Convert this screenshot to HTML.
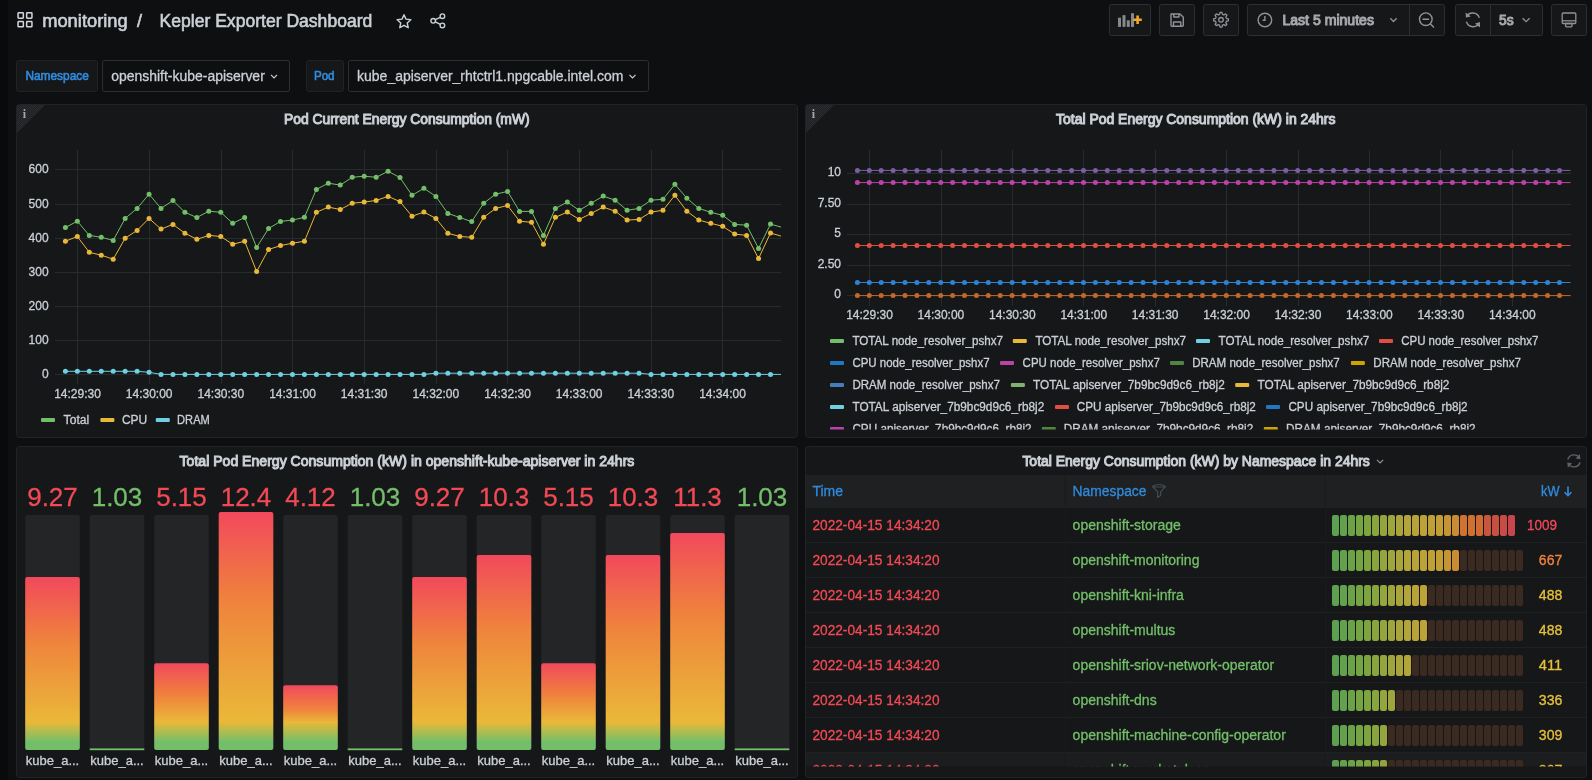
<!DOCTYPE html><html><head><meta charset="utf-8"><title>Kepler Exporter Dashboard</title>
<style>html,body{margin:0;padding:0;background:#0e0f11;width:1592px;height:780px;overflow:hidden}svg{display:block;font-family:"Liberation Sans", sans-serif;will-change:transform}text{stroke-width:0.3px}</style></head><body>
<svg width="1592" height="780" viewBox="0 0 1592 780">
<defs>
<pattern id="hatch" width="2" height="2" patternUnits="userSpaceOnUse"><rect width="2" height="2" fill="#1f2023"/><rect width="1" height="1" fill="#2c2d31"/><rect x="1" y="1" width="1" height="1" fill="#2c2d31"/></pattern>
<linearGradient id="bargrad" x1="0" y1="1" x2="0" y2="0"><stop offset="0" stop-color="#73bf69"/><stop offset="0.025" stop-color="#73bf69"/><stop offset="0.13" stop-color="#eab839"/><stop offset="0.5" stop-color="#ef843c"/><stop offset="0.92" stop-color="#f2495c"/><stop offset="1" stop-color="#f2495c"/></linearGradient>
<clipPath id="c1"><rect x="54.8" y="140" width="726.2" height="250"/></clipPath>
<clipPath id="c2"><rect x="846.9" y="140" width="723.6" height="170"/></clipPath>
<clipPath id="leg2"><rect x="805" y="325" width="782" height="104.5"/></clipPath>
<clipPath id="tbl"><rect x="805" y="470" width="782" height="296.5"/></clipPath>
</defs>
<rect width="1592" height="780" fill="#0e0f11"/>
<rect x="0" y="0" width="8" height="780" fill="#0a0a0c"/>
<rect x="18.05" y="12.85" width="5.3" height="5.3" rx="0.7" fill="none" stroke="#d4d8de" style="stroke-width:1.5px"/>
<rect x="26.65" y="12.85" width="5.3" height="5.3" rx="0.7" fill="none" stroke="#d4d8de" style="stroke-width:1.5px"/>
<rect x="18.05" y="21.55" width="5.3" height="5.3" rx="0.7" fill="none" stroke="#d4d8de" style="stroke-width:1.5px"/>
<rect x="26.65" y="21.55" width="5.3" height="5.3" rx="0.7" fill="none" stroke="#d4d8de" style="stroke-width:1.5px"/>
<text x="42.2" y="27" font-size="18" fill="#cbd0d6" stroke="#cbd0d6" style="stroke-width:0.6px" textLength="85.5" lengthAdjust="spacingAndGlyphs">monitoring</text>
<text x="137" y="27" font-size="18" fill="#cbd0d6" stroke="#cbd0d6" style="stroke-width:0.6px">/</text>
<text x="159.5" y="27" font-size="18" fill="#cbd0d6" stroke="#cbd0d6" style="stroke-width:0.6px" textLength="212.8" lengthAdjust="spacingAndGlyphs">Kepler Exporter Dashboard</text>
<polygon points="404.00,14.70 406.00,19.15 410.85,19.68 407.23,22.95 408.23,27.72 404.00,25.30 399.77,27.72 400.77,22.95 397.15,19.68 402.00,19.15" fill="none" stroke="#cbd0d6" stroke-width="1.4" stroke-linejoin="round"/>
<g fill="none" stroke="#cbd0d6" stroke-width="1.4"><circle cx="442.4" cy="16.2" r="2.3"/><circle cx="433.2" cy="20.8" r="2.3"/><circle cx="442.4" cy="25.4" r="2.3"/><path d="M435.3 19.7 L440.3 17.3 M435.3 21.9 L440.3 24.3"/></g>
<rect x="1109.5" y="4.5" width="41" height="31" rx="2" fill="#161719" stroke="#2d2f31" stroke-width="1"/>
<rect x="1159.5" y="4.5" width="35" height="31" rx="2" fill="#161719" stroke="#2d2f31" stroke-width="1"/>
<rect x="1203.5" y="4.5" width="35" height="31" rx="2" fill="#161719" stroke="#2d2f31" stroke-width="1"/>
<rect x="1247.5" y="4.5" width="197" height="31" rx="2" fill="#161719" stroke="#2d2f31" stroke-width="1"/>
<rect x="1409" y="5" width="1" height="30" fill="#2d2f31"/>
<rect x="1455.5" y="4.5" width="87" height="31" rx="2" fill="#161719" stroke="#2d2f31" stroke-width="1"/>
<rect x="1490" y="5" width="1" height="30" fill="#2d2f31"/>
<rect x="1551.5" y="4.5" width="35" height="31" rx="2" fill="#161719" stroke="#2d2f31" stroke-width="1"/>
<g fill="#86888c"><rect x="1118" y="17.7" width="3" height="9.2"/><rect x="1122.5" y="15.1" width="3" height="11.8"/><rect x="1126.8" y="20.3" width="3" height="6.6"/><rect x="1131" y="13.2" width="3" height="13.7"/></g>
<path d="M1137.6 15.6 V24 M1133.4 19.8 H1141.8" stroke="#f5a623" stroke-width="2.6"/>
<g fill="none" stroke="#909297" stroke-width="1.4" stroke-linejoin="round"><path d="M1171 14 H1180 L1183.3 17.3 V25.2 Q1183.3 26.2 1182.3 26.2 H1171.9 Q1171 26.2 1171 25.2 Z"/><path d="M1173.8 14 V17 H1179 V14"/><path d="M1173.5 26.2 V22 H1180.8 V26.2"/></g>
<polygon points="1228.40,19.80 1228.34,20.77 1226.41,21.25 1226.17,21.94 1225.85,22.60 1226.87,24.30 1226.23,25.03 1225.50,25.67 1223.80,24.65 1223.14,24.97 1222.45,25.21 1221.97,27.14 1221.00,27.20 1220.03,27.14 1219.55,25.21 1218.86,24.97 1218.20,24.65 1216.50,25.67 1215.77,25.03 1215.13,24.30 1216.15,22.60 1215.83,21.94 1215.59,21.25 1213.66,20.77 1213.60,19.80 1213.66,18.83 1215.59,18.35 1215.83,17.66 1216.15,17.00 1215.13,15.30 1215.77,14.57 1216.50,13.93 1218.20,14.95 1218.86,14.63 1219.55,14.39 1220.03,12.46 1221.00,12.40 1221.97,12.46 1222.45,14.39 1223.14,14.63 1223.80,14.95 1225.50,13.93 1226.23,14.57 1226.87,15.30 1225.85,17.00 1226.17,17.66 1226.41,18.35 1228.34,18.83" fill="none" stroke="#909297" stroke-width="1.3" stroke-linejoin="round"/>
<circle cx="1221" cy="19.8" r="2.3" fill="none" stroke="#909297" stroke-width="1.3"/>
<g fill="none" stroke="#909297" stroke-width="1.4"><circle cx="1264.9" cy="20" r="6.8"/><path d="M1264.9 16 V20.3 H1262.6"/></g>
<text x="1282.4" y="24.9" font-size="14" fill="#a6a8ac" stroke="#a6a8ac" style="stroke-width:1px" textLength="91.6" lengthAdjust="spacingAndGlyphs">Last 5 minutes</text>
<path d="M1390.3 18.3 L1393.5 21.5 L1396.7 18.3" fill="none" stroke="#909297" stroke-width="1.3"/>
<g fill="none" stroke="#909297" stroke-width="1.4"><circle cx="1425.8" cy="19.2" r="6.3"/><path d="M1430.3 23.7 L1434 27.4 M1422.5 19.2 H1429.1"/></g>
<g fill="none" stroke="#909297" stroke-width="1.4"><path d="M1466.3 17 A7 7 0 0 1 1479.3 17.8"/><path d="M1479.5 22.5 A7 7 0 0 1 1466.4 21.8"/></g>
<path d="M1465.6 12.4 L1466 17.6 L1470.8 16.4 Z M1480.1 27.4 L1479.8 22.2 L1475 23.4 Z" fill="#909297"/>
<text x="1499" y="24.6" font-size="14" fill="#a6a8ac" stroke="#a6a8ac" style="stroke-width:1px" textLength="14.6" lengthAdjust="spacingAndGlyphs">5s</text>
<path d="M1522.6 18.3 L1526.1 21.6 L1529.6 18.3" fill="none" stroke="#909297" stroke-width="1.3"/>
<g fill="none" stroke="#909297" stroke-width="1.3"><rect x="1562.2" y="13" width="13.6" height="10.5" rx="1"/><path d="M1562.2 20.8 H1575.8"/><rect x="1565.6" y="23.5" width="6.4" height="3.3" rx="0.8"/></g>
<rect x="16.5" y="60.5" width="81" height="31" rx="2" fill="#161719" stroke="#212224" stroke-width="1"/>
<text x="25.4" y="79.8" font-size="12" fill="#318bdc" stroke="#318bdc" style="stroke-width:0.6px" textLength="63.4" lengthAdjust="spacingAndGlyphs">Namespace</text>
<rect x="102.5" y="60.5" width="187" height="31" rx="2" fill="#0e0f11" stroke="#2d2f31" stroke-width="1"/>
<text x="111.2" y="80.5" font-size="14" fill="#cbd0d6" stroke="#cbd0d6" textLength="153.6" lengthAdjust="spacingAndGlyphs">openshift-kube-apiserver</text>
<path d="M271 74.8 L274 77.8 L277 74.8" fill="none" stroke="#cbd0d6" stroke-width="1.2"/>
<rect x="306.5" y="60.5" width="37" height="31" rx="2" fill="#161719" stroke="#212224" stroke-width="1"/>
<text x="313.9" y="79.8" font-size="12" fill="#318bdc" stroke="#318bdc" style="stroke-width:0.6px" textLength="20.7" lengthAdjust="spacingAndGlyphs">Pod</text>
<rect x="348.5" y="60.5" width="300" height="31" rx="2" fill="#0e0f11" stroke="#2d2f31" stroke-width="1"/>
<text x="357.1" y="80.5" font-size="14" fill="#cbd0d6" stroke="#cbd0d6" textLength="266.3" lengthAdjust="spacingAndGlyphs">kube_apiserver_rhtctrl1.npgcable.intel.com</text>
<path d="M629.5 74.8 L632.5 77.8 L635.5 74.8" fill="none" stroke="#cbd0d6" stroke-width="1.2"/>
<rect x="16.5" y="104.5" width="781" height="333" rx="3" fill="#161719" stroke="#222327" stroke-width="1"/>
<rect x="805.5" y="104.5" width="781" height="333" rx="3" fill="#161719" stroke="#222327" stroke-width="1"/>
<rect x="16.5" y="446.5" width="781" height="331" rx="3" fill="#161719" stroke="#222327" stroke-width="1"/>
<rect x="805.5" y="446.5" width="781" height="331" rx="3" fill="#161719" stroke="#222327" stroke-width="1"/>
<path d="M17 105 H45 L17 133 Z" fill="url(#hatch)"/>
<text x="22.8" y="118" font-size="12" fill="#a4a8ac" font-weight="700" font-family="Liberation Serif">i</text>
<path d="M806 105 H834 L806 133 Z" fill="url(#hatch)"/>
<text x="811.8" y="118" font-size="12" fill="#a4a8ac" font-weight="700" font-family="Liberation Serif">i</text>
<text x="284" y="123.8" font-size="14" fill="#cbd0d6" stroke="#cbd0d6" style="stroke-width:1px" textLength="245.6" lengthAdjust="spacingAndGlyphs">Pod Current Energy Consumption (mW)</text>
<text x="1056" y="123.8" font-size="14" fill="#cbd0d6" stroke="#cbd0d6" style="stroke-width:1px" textLength="279.5" lengthAdjust="spacingAndGlyphs">Total Pod Energy Consumption (kW) in 24hrs</text>
<text x="179.6" y="465.9" font-size="14" fill="#cbd0d6" stroke="#cbd0d6" style="stroke-width:1px" textLength="454.8" lengthAdjust="spacingAndGlyphs">Total Pod Energy Consumption (kW) in openshift-kube-apiserver in 24hrs</text>
<text x="1022.4" y="465.9" font-size="14" fill="#cbd0d6" stroke="#cbd0d6" style="stroke-width:1px" textLength="347.4" lengthAdjust="spacingAndGlyphs">Total Energy Consumption (kW) by Namespace in 24hrs</text>
<path d="M1377 459.8 L1380.1 462.9 L1383.2 459.8" fill="none" stroke="#909297" stroke-width="1.2"/>
<rect x="55" y="374.00" width="726" height="1" fill="#262b2d"/>
<text x="48.6" y="377.5" font-size="12" fill="#cbd0d6" stroke="#cbd0d6" text-anchor="end">0</text>
<rect x="55" y="340.00" width="726" height="1" fill="#262b2d"/>
<text x="48.6" y="343.5" font-size="12" fill="#cbd0d6" stroke="#cbd0d6" text-anchor="end">100</text>
<rect x="55" y="306.00" width="726" height="1" fill="#262b2d"/>
<text x="48.6" y="309.5" font-size="12" fill="#cbd0d6" stroke="#cbd0d6" text-anchor="end">200</text>
<rect x="55" y="272.00" width="726" height="1" fill="#262b2d"/>
<text x="48.6" y="275.5" font-size="12" fill="#cbd0d6" stroke="#cbd0d6" text-anchor="end">300</text>
<rect x="55" y="238.00" width="726" height="1" fill="#262b2d"/>
<text x="48.6" y="241.5" font-size="12" fill="#cbd0d6" stroke="#cbd0d6" text-anchor="end">400</text>
<rect x="55" y="204.00" width="726" height="1" fill="#262b2d"/>
<text x="48.6" y="207.5" font-size="12" fill="#cbd0d6" stroke="#cbd0d6" text-anchor="end">500</text>
<rect x="55" y="169.00" width="726" height="1" fill="#262b2d"/>
<text x="48.6" y="172.5" font-size="12" fill="#cbd0d6" stroke="#cbd0d6" text-anchor="end">600</text>
<rect x="77" y="150" width="1" height="234" fill="#262b2d"/>
<text x="77.5" y="397.8" font-size="12" fill="#cbd0d6" stroke="#cbd0d6" text-anchor="middle">14:29:30</text>
<rect x="149" y="150" width="1" height="234" fill="#262b2d"/>
<text x="149.17" y="397.8" font-size="12" fill="#cbd0d6" stroke="#cbd0d6" text-anchor="middle">14:30:00</text>
<rect x="221" y="150" width="1" height="234" fill="#262b2d"/>
<text x="220.84" y="397.8" font-size="12" fill="#cbd0d6" stroke="#cbd0d6" text-anchor="middle">14:30:30</text>
<rect x="292" y="150" width="1" height="234" fill="#262b2d"/>
<text x="292.51" y="397.8" font-size="12" fill="#cbd0d6" stroke="#cbd0d6" text-anchor="middle">14:31:00</text>
<rect x="364" y="150" width="1" height="234" fill="#262b2d"/>
<text x="364.18" y="397.8" font-size="12" fill="#cbd0d6" stroke="#cbd0d6" text-anchor="middle">14:31:30</text>
<rect x="436" y="150" width="1" height="234" fill="#262b2d"/>
<text x="435.85" y="397.8" font-size="12" fill="#cbd0d6" stroke="#cbd0d6" text-anchor="middle">14:32:00</text>
<rect x="507" y="150" width="1" height="234" fill="#262b2d"/>
<text x="507.52" y="397.8" font-size="12" fill="#cbd0d6" stroke="#cbd0d6" text-anchor="middle">14:32:30</text>
<rect x="579" y="150" width="1" height="234" fill="#262b2d"/>
<text x="579.19" y="397.8" font-size="12" fill="#cbd0d6" stroke="#cbd0d6" text-anchor="middle">14:33:00</text>
<rect x="651" y="150" width="1" height="234" fill="#262b2d"/>
<text x="650.86" y="397.8" font-size="12" fill="#cbd0d6" stroke="#cbd0d6" text-anchor="middle">14:33:30</text>
<rect x="722" y="150" width="1" height="234" fill="#262b2d"/>
<text x="722.53" y="397.8" font-size="12" fill="#cbd0d6" stroke="#cbd0d6" text-anchor="middle">14:34:00</text>
<g clip-path="url(#c1)"><path d="M65.40 371.30 L77.35 371.30 L89.30 371.30 L101.25 371.30 L113.20 371.30 L125.16 371.30 L137.11 371.30 L149.06 372.30 L161.01 374.40 L172.96 374.40 L184.91 374.40 L196.86 374.40 L208.81 374.40 L220.76 374.40 L232.71 374.40 L244.67 374.40 L256.62 374.40 L268.57 374.40 L280.52 374.40 L292.47 374.40 L304.42 374.40 L316.37 374.40 L328.32 374.40 L340.27 374.40 L352.22 374.40 L364.18 374.40 L376.13 374.40 L388.08 374.40 L400.03 374.40 L411.98 374.40 L423.93 374.40 L435.88 373.20 L447.83 373.20 L459.78 373.20 L471.73 373.20 L483.69 373.20 L495.64 373.20 L507.59 373.20 L519.54 373.20 L531.49 373.20 L543.44 373.20 L555.39 373.20 L567.34 373.20 L579.29 373.20 L591.24 373.20 L603.20 373.20 L615.15 373.20 L627.10 373.20 L639.05 373.20 L651.00 374.40 L662.95 374.40 L674.90 374.40 L686.85 374.40 L698.80 374.40 L710.75 374.40 L722.71 374.40 L734.66 374.40 L746.61 374.40 L758.56 374.40 L770.51 374.40 L782.46 374.40" fill="none" stroke="#6ed0e0" stroke-width="1"/>
<circle cx="65.40" cy="371.30" r="2.5" fill="#6ed0e0"/><circle cx="77.35" cy="371.30" r="2.5" fill="#6ed0e0"/><circle cx="89.30" cy="371.30" r="2.5" fill="#6ed0e0"/><circle cx="101.25" cy="371.30" r="2.5" fill="#6ed0e0"/><circle cx="113.20" cy="371.30" r="2.5" fill="#6ed0e0"/><circle cx="125.16" cy="371.30" r="2.5" fill="#6ed0e0"/><circle cx="137.11" cy="371.30" r="2.5" fill="#6ed0e0"/><circle cx="149.06" cy="372.30" r="2.5" fill="#6ed0e0"/><circle cx="161.01" cy="374.40" r="2.5" fill="#6ed0e0"/><circle cx="172.96" cy="374.40" r="2.5" fill="#6ed0e0"/><circle cx="184.91" cy="374.40" r="2.5" fill="#6ed0e0"/><circle cx="196.86" cy="374.40" r="2.5" fill="#6ed0e0"/><circle cx="208.81" cy="374.40" r="2.5" fill="#6ed0e0"/><circle cx="220.76" cy="374.40" r="2.5" fill="#6ed0e0"/><circle cx="232.71" cy="374.40" r="2.5" fill="#6ed0e0"/><circle cx="244.67" cy="374.40" r="2.5" fill="#6ed0e0"/><circle cx="256.62" cy="374.40" r="2.5" fill="#6ed0e0"/><circle cx="268.57" cy="374.40" r="2.5" fill="#6ed0e0"/><circle cx="280.52" cy="374.40" r="2.5" fill="#6ed0e0"/><circle cx="292.47" cy="374.40" r="2.5" fill="#6ed0e0"/><circle cx="304.42" cy="374.40" r="2.5" fill="#6ed0e0"/><circle cx="316.37" cy="374.40" r="2.5" fill="#6ed0e0"/><circle cx="328.32" cy="374.40" r="2.5" fill="#6ed0e0"/><circle cx="340.27" cy="374.40" r="2.5" fill="#6ed0e0"/><circle cx="352.22" cy="374.40" r="2.5" fill="#6ed0e0"/><circle cx="364.18" cy="374.40" r="2.5" fill="#6ed0e0"/><circle cx="376.13" cy="374.40" r="2.5" fill="#6ed0e0"/><circle cx="388.08" cy="374.40" r="2.5" fill="#6ed0e0"/><circle cx="400.03" cy="374.40" r="2.5" fill="#6ed0e0"/><circle cx="411.98" cy="374.40" r="2.5" fill="#6ed0e0"/><circle cx="423.93" cy="374.40" r="2.5" fill="#6ed0e0"/><circle cx="435.88" cy="373.20" r="2.5" fill="#6ed0e0"/><circle cx="447.83" cy="373.20" r="2.5" fill="#6ed0e0"/><circle cx="459.78" cy="373.20" r="2.5" fill="#6ed0e0"/><circle cx="471.73" cy="373.20" r="2.5" fill="#6ed0e0"/><circle cx="483.69" cy="373.20" r="2.5" fill="#6ed0e0"/><circle cx="495.64" cy="373.20" r="2.5" fill="#6ed0e0"/><circle cx="507.59" cy="373.20" r="2.5" fill="#6ed0e0"/><circle cx="519.54" cy="373.20" r="2.5" fill="#6ed0e0"/><circle cx="531.49" cy="373.20" r="2.5" fill="#6ed0e0"/><circle cx="543.44" cy="373.20" r="2.5" fill="#6ed0e0"/><circle cx="555.39" cy="373.20" r="2.5" fill="#6ed0e0"/><circle cx="567.34" cy="373.20" r="2.5" fill="#6ed0e0"/><circle cx="579.29" cy="373.20" r="2.5" fill="#6ed0e0"/><circle cx="591.24" cy="373.20" r="2.5" fill="#6ed0e0"/><circle cx="603.20" cy="373.20" r="2.5" fill="#6ed0e0"/><circle cx="615.15" cy="373.20" r="2.5" fill="#6ed0e0"/><circle cx="627.10" cy="373.20" r="2.5" fill="#6ed0e0"/><circle cx="639.05" cy="373.20" r="2.5" fill="#6ed0e0"/><circle cx="651.00" cy="374.40" r="2.5" fill="#6ed0e0"/><circle cx="662.95" cy="374.40" r="2.5" fill="#6ed0e0"/><circle cx="674.90" cy="374.40" r="2.5" fill="#6ed0e0"/><circle cx="686.85" cy="374.40" r="2.5" fill="#6ed0e0"/><circle cx="698.80" cy="374.40" r="2.5" fill="#6ed0e0"/><circle cx="710.75" cy="374.40" r="2.5" fill="#6ed0e0"/><circle cx="722.71" cy="374.40" r="2.5" fill="#6ed0e0"/><circle cx="734.66" cy="374.40" r="2.5" fill="#6ed0e0"/><circle cx="746.61" cy="374.40" r="2.5" fill="#6ed0e0"/><circle cx="758.56" cy="374.40" r="2.5" fill="#6ed0e0"/><circle cx="770.51" cy="374.40" r="2.5" fill="#6ed0e0"/>
</g>
<g clip-path="url(#c1)"><path d="M65.40 241.20 L77.35 236.50 L89.30 252.30 L101.25 255.20 L113.20 259.20 L125.16 238.20 L137.11 230.40 L149.06 218.40 L161.01 229.10 L172.96 224.40 L184.91 233.20 L196.86 239.30 L208.81 235.40 L220.76 236.50 L232.71 244.30 L244.67 241.20 L256.62 271.50 L268.57 249.50 L280.52 245.60 L292.47 243.20 L304.42 241.30 L316.37 212.30 L328.32 207.10 L340.27 209.50 L352.22 203.20 L364.18 202.10 L376.13 200.40 L388.08 196.40 L400.03 201.60 L411.98 216.20 L423.93 212.10 L435.88 218.40 L447.83 233.20 L459.78 236.50 L471.73 237.30 L483.69 217.30 L495.64 208.40 L507.59 205.50 L519.54 221.20 L531.49 222.30 L543.44 244.30 L555.39 217.30 L567.34 212.10 L579.29 219.40 L591.24 213.40 L603.20 207.10 L615.15 211.20 L627.10 220.10 L639.05 219.40 L651.00 212.10 L662.95 210.30 L674.90 195.30 L686.85 211.20 L698.80 220.10 L710.75 223.30 L722.71 226.30 L734.66 234.10 L746.61 235.40 L758.56 258.50 L770.51 233.00 L782.46 236.50" fill="none" stroke="#eab839" stroke-width="1"/>
<circle cx="65.40" cy="241.20" r="2.5" fill="#eab839"/><circle cx="77.35" cy="236.50" r="2.5" fill="#eab839"/><circle cx="89.30" cy="252.30" r="2.5" fill="#eab839"/><circle cx="101.25" cy="255.20" r="2.5" fill="#eab839"/><circle cx="113.20" cy="259.20" r="2.5" fill="#eab839"/><circle cx="125.16" cy="238.20" r="2.5" fill="#eab839"/><circle cx="137.11" cy="230.40" r="2.5" fill="#eab839"/><circle cx="149.06" cy="218.40" r="2.5" fill="#eab839"/><circle cx="161.01" cy="229.10" r="2.5" fill="#eab839"/><circle cx="172.96" cy="224.40" r="2.5" fill="#eab839"/><circle cx="184.91" cy="233.20" r="2.5" fill="#eab839"/><circle cx="196.86" cy="239.30" r="2.5" fill="#eab839"/><circle cx="208.81" cy="235.40" r="2.5" fill="#eab839"/><circle cx="220.76" cy="236.50" r="2.5" fill="#eab839"/><circle cx="232.71" cy="244.30" r="2.5" fill="#eab839"/><circle cx="244.67" cy="241.20" r="2.5" fill="#eab839"/><circle cx="256.62" cy="271.50" r="2.5" fill="#eab839"/><circle cx="268.57" cy="249.50" r="2.5" fill="#eab839"/><circle cx="280.52" cy="245.60" r="2.5" fill="#eab839"/><circle cx="292.47" cy="243.20" r="2.5" fill="#eab839"/><circle cx="304.42" cy="241.30" r="2.5" fill="#eab839"/><circle cx="316.37" cy="212.30" r="2.5" fill="#eab839"/><circle cx="328.32" cy="207.10" r="2.5" fill="#eab839"/><circle cx="340.27" cy="209.50" r="2.5" fill="#eab839"/><circle cx="352.22" cy="203.20" r="2.5" fill="#eab839"/><circle cx="364.18" cy="202.10" r="2.5" fill="#eab839"/><circle cx="376.13" cy="200.40" r="2.5" fill="#eab839"/><circle cx="388.08" cy="196.40" r="2.5" fill="#eab839"/><circle cx="400.03" cy="201.60" r="2.5" fill="#eab839"/><circle cx="411.98" cy="216.20" r="2.5" fill="#eab839"/><circle cx="423.93" cy="212.10" r="2.5" fill="#eab839"/><circle cx="435.88" cy="218.40" r="2.5" fill="#eab839"/><circle cx="447.83" cy="233.20" r="2.5" fill="#eab839"/><circle cx="459.78" cy="236.50" r="2.5" fill="#eab839"/><circle cx="471.73" cy="237.30" r="2.5" fill="#eab839"/><circle cx="483.69" cy="217.30" r="2.5" fill="#eab839"/><circle cx="495.64" cy="208.40" r="2.5" fill="#eab839"/><circle cx="507.59" cy="205.50" r="2.5" fill="#eab839"/><circle cx="519.54" cy="221.20" r="2.5" fill="#eab839"/><circle cx="531.49" cy="222.30" r="2.5" fill="#eab839"/><circle cx="543.44" cy="244.30" r="2.5" fill="#eab839"/><circle cx="555.39" cy="217.30" r="2.5" fill="#eab839"/><circle cx="567.34" cy="212.10" r="2.5" fill="#eab839"/><circle cx="579.29" cy="219.40" r="2.5" fill="#eab839"/><circle cx="591.24" cy="213.40" r="2.5" fill="#eab839"/><circle cx="603.20" cy="207.10" r="2.5" fill="#eab839"/><circle cx="615.15" cy="211.20" r="2.5" fill="#eab839"/><circle cx="627.10" cy="220.10" r="2.5" fill="#eab839"/><circle cx="639.05" cy="219.40" r="2.5" fill="#eab839"/><circle cx="651.00" cy="212.10" r="2.5" fill="#eab839"/><circle cx="662.95" cy="210.30" r="2.5" fill="#eab839"/><circle cx="674.90" cy="195.30" r="2.5" fill="#eab839"/><circle cx="686.85" cy="211.20" r="2.5" fill="#eab839"/><circle cx="698.80" cy="220.10" r="2.5" fill="#eab839"/><circle cx="710.75" cy="223.30" r="2.5" fill="#eab839"/><circle cx="722.71" cy="226.30" r="2.5" fill="#eab839"/><circle cx="734.66" cy="234.10" r="2.5" fill="#eab839"/><circle cx="746.61" cy="235.40" r="2.5" fill="#eab839"/><circle cx="758.56" cy="258.50" r="2.5" fill="#eab839"/><circle cx="770.51" cy="233.00" r="2.5" fill="#eab839"/>
</g>
<g clip-path="url(#c1)"><path d="M65.40 227.50 L77.35 221.20 L89.30 235.40 L101.25 237.30 L113.20 240.40 L125.16 218.40 L137.11 208.40 L149.06 194.20 L161.01 208.40 L172.96 200.50 L184.91 212.30 L196.86 217.50 L208.81 211.20 L220.76 212.30 L232.71 223.30 L244.67 217.50 L256.62 247.50 L268.57 228.50 L280.52 221.40 L292.47 220.10 L304.42 217.30 L316.37 189.40 L328.32 183.20 L340.27 185.10 L352.22 177.30 L364.18 176.20 L376.13 177.30 L388.08 171.30 L400.03 177.60 L411.98 195.30 L423.93 188.30 L435.88 196.40 L447.83 213.40 L459.78 217.50 L471.73 221.60 L483.69 203.20 L495.64 194.20 L507.59 191.40 L519.54 211.40 L531.49 211.40 L543.44 235.40 L555.39 208.40 L567.34 202.10 L579.29 210.30 L591.24 203.20 L603.20 196.10 L615.15 200.20 L627.10 210.30 L639.05 208.40 L651.00 200.20 L662.95 199.30 L674.90 184.30 L686.85 198.20 L698.80 208.40 L710.75 212.30 L722.71 215.30 L734.66 224.40 L746.61 225.20 L758.56 248.40 L770.51 224.10 L782.46 227.50" fill="none" stroke="#73bf69" stroke-width="1"/>
<circle cx="65.40" cy="227.50" r="2.5" fill="#73bf69"/><circle cx="77.35" cy="221.20" r="2.5" fill="#73bf69"/><circle cx="89.30" cy="235.40" r="2.5" fill="#73bf69"/><circle cx="101.25" cy="237.30" r="2.5" fill="#73bf69"/><circle cx="113.20" cy="240.40" r="2.5" fill="#73bf69"/><circle cx="125.16" cy="218.40" r="2.5" fill="#73bf69"/><circle cx="137.11" cy="208.40" r="2.5" fill="#73bf69"/><circle cx="149.06" cy="194.20" r="2.5" fill="#73bf69"/><circle cx="161.01" cy="208.40" r="2.5" fill="#73bf69"/><circle cx="172.96" cy="200.50" r="2.5" fill="#73bf69"/><circle cx="184.91" cy="212.30" r="2.5" fill="#73bf69"/><circle cx="196.86" cy="217.50" r="2.5" fill="#73bf69"/><circle cx="208.81" cy="211.20" r="2.5" fill="#73bf69"/><circle cx="220.76" cy="212.30" r="2.5" fill="#73bf69"/><circle cx="232.71" cy="223.30" r="2.5" fill="#73bf69"/><circle cx="244.67" cy="217.50" r="2.5" fill="#73bf69"/><circle cx="256.62" cy="247.50" r="2.5" fill="#73bf69"/><circle cx="268.57" cy="228.50" r="2.5" fill="#73bf69"/><circle cx="280.52" cy="221.40" r="2.5" fill="#73bf69"/><circle cx="292.47" cy="220.10" r="2.5" fill="#73bf69"/><circle cx="304.42" cy="217.30" r="2.5" fill="#73bf69"/><circle cx="316.37" cy="189.40" r="2.5" fill="#73bf69"/><circle cx="328.32" cy="183.20" r="2.5" fill="#73bf69"/><circle cx="340.27" cy="185.10" r="2.5" fill="#73bf69"/><circle cx="352.22" cy="177.30" r="2.5" fill="#73bf69"/><circle cx="364.18" cy="176.20" r="2.5" fill="#73bf69"/><circle cx="376.13" cy="177.30" r="2.5" fill="#73bf69"/><circle cx="388.08" cy="171.30" r="2.5" fill="#73bf69"/><circle cx="400.03" cy="177.60" r="2.5" fill="#73bf69"/><circle cx="411.98" cy="195.30" r="2.5" fill="#73bf69"/><circle cx="423.93" cy="188.30" r="2.5" fill="#73bf69"/><circle cx="435.88" cy="196.40" r="2.5" fill="#73bf69"/><circle cx="447.83" cy="213.40" r="2.5" fill="#73bf69"/><circle cx="459.78" cy="217.50" r="2.5" fill="#73bf69"/><circle cx="471.73" cy="221.60" r="2.5" fill="#73bf69"/><circle cx="483.69" cy="203.20" r="2.5" fill="#73bf69"/><circle cx="495.64" cy="194.20" r="2.5" fill="#73bf69"/><circle cx="507.59" cy="191.40" r="2.5" fill="#73bf69"/><circle cx="519.54" cy="211.40" r="2.5" fill="#73bf69"/><circle cx="531.49" cy="211.40" r="2.5" fill="#73bf69"/><circle cx="543.44" cy="235.40" r="2.5" fill="#73bf69"/><circle cx="555.39" cy="208.40" r="2.5" fill="#73bf69"/><circle cx="567.34" cy="202.10" r="2.5" fill="#73bf69"/><circle cx="579.29" cy="210.30" r="2.5" fill="#73bf69"/><circle cx="591.24" cy="203.20" r="2.5" fill="#73bf69"/><circle cx="603.20" cy="196.10" r="2.5" fill="#73bf69"/><circle cx="615.15" cy="200.20" r="2.5" fill="#73bf69"/><circle cx="627.10" cy="210.30" r="2.5" fill="#73bf69"/><circle cx="639.05" cy="208.40" r="2.5" fill="#73bf69"/><circle cx="651.00" cy="200.20" r="2.5" fill="#73bf69"/><circle cx="662.95" cy="199.30" r="2.5" fill="#73bf69"/><circle cx="674.90" cy="184.30" r="2.5" fill="#73bf69"/><circle cx="686.85" cy="198.20" r="2.5" fill="#73bf69"/><circle cx="698.80" cy="208.40" r="2.5" fill="#73bf69"/><circle cx="710.75" cy="212.30" r="2.5" fill="#73bf69"/><circle cx="722.71" cy="215.30" r="2.5" fill="#73bf69"/><circle cx="734.66" cy="224.40" r="2.5" fill="#73bf69"/><circle cx="746.61" cy="225.20" r="2.5" fill="#73bf69"/><circle cx="758.56" cy="248.40" r="2.5" fill="#73bf69"/><circle cx="770.51" cy="224.10" r="2.5" fill="#73bf69"/>
</g>
<rect x="41" y="418" width="14" height="4" rx="1" fill="#73bf69"/>
<text x="63.6" y="423.7" font-size="12" fill="#cbd0d6" stroke="#cbd0d6" textLength="25.6" lengthAdjust="spacingAndGlyphs">Total</text>
<rect x="100.4" y="418" width="14" height="4" rx="1" fill="#eab839"/>
<text x="121.9" y="423.7" font-size="12" fill="#cbd0d6" stroke="#cbd0d6">CPU</text>
<rect x="155.8" y="418" width="14" height="4" rx="1" fill="#6ed0e0"/>
<text x="177.1" y="423.7" font-size="12" fill="#cbd0d6" stroke="#cbd0d6" textLength="32.7" lengthAdjust="spacingAndGlyphs">DRAM</text>
<rect x="847" y="295.00" width="724" height="1" fill="#262b2d"/>
<text x="841" y="298.1" font-size="12" fill="#cbd0d6" stroke="#cbd0d6" text-anchor="end">0</text>
<rect x="847" y="265.00" width="724" height="1" fill="#262b2d"/>
<text x="841" y="268.1" font-size="12" fill="#cbd0d6" stroke="#cbd0d6" text-anchor="end">2.50</text>
<rect x="847" y="234.00" width="724" height="1" fill="#262b2d"/>
<text x="841" y="237.1" font-size="12" fill="#cbd0d6" stroke="#cbd0d6" text-anchor="end">5</text>
<rect x="847" y="204.00" width="724" height="1" fill="#262b2d"/>
<text x="841" y="207.1" font-size="12" fill="#cbd0d6" stroke="#cbd0d6" text-anchor="end">7.50</text>
<rect x="847" y="173.00" width="724" height="1" fill="#262b2d"/>
<text x="841" y="176.1" font-size="12" fill="#cbd0d6" stroke="#cbd0d6" text-anchor="end">10</text>
<rect x="869" y="150" width="1" height="156" fill="#262b2d"/>
<text x="869.5" y="319" font-size="12" fill="#cbd0d6" stroke="#cbd0d6" text-anchor="middle">14:29:30</text>
<rect x="941" y="150" width="1" height="156" fill="#262b2d"/>
<text x="940.92" y="319" font-size="12" fill="#cbd0d6" stroke="#cbd0d6" text-anchor="middle">14:30:00</text>
<rect x="1012" y="150" width="1" height="156" fill="#262b2d"/>
<text x="1012.34" y="319" font-size="12" fill="#cbd0d6" stroke="#cbd0d6" text-anchor="middle">14:30:30</text>
<rect x="1083" y="150" width="1" height="156" fill="#262b2d"/>
<text x="1083.76" y="319" font-size="12" fill="#cbd0d6" stroke="#cbd0d6" text-anchor="middle">14:31:00</text>
<rect x="1155" y="150" width="1" height="156" fill="#262b2d"/>
<text x="1155.18" y="319" font-size="12" fill="#cbd0d6" stroke="#cbd0d6" text-anchor="middle">14:31:30</text>
<rect x="1226" y="150" width="1" height="156" fill="#262b2d"/>
<text x="1226.6" y="319" font-size="12" fill="#cbd0d6" stroke="#cbd0d6" text-anchor="middle">14:32:00</text>
<rect x="1298" y="150" width="1" height="156" fill="#262b2d"/>
<text x="1298.02" y="319" font-size="12" fill="#cbd0d6" stroke="#cbd0d6" text-anchor="middle">14:32:30</text>
<rect x="1369" y="150" width="1" height="156" fill="#262b2d"/>
<text x="1369.44" y="319" font-size="12" fill="#cbd0d6" stroke="#cbd0d6" text-anchor="middle">14:33:00</text>
<rect x="1440" y="150" width="1" height="156" fill="#262b2d"/>
<text x="1440.86" y="319" font-size="12" fill="#cbd0d6" stroke="#cbd0d6" text-anchor="middle">14:33:30</text>
<rect x="1512" y="150" width="1" height="156" fill="#262b2d"/>
<text x="1512.28" y="319" font-size="12" fill="#cbd0d6" stroke="#cbd0d6" text-anchor="middle">14:34:00</text>
<g clip-path="url(#c2)"><path d="M857.40 295.60 L869.30 295.60 L881.20 295.60 L893.10 295.60 L905.00 295.60 L916.90 295.60 L928.80 295.60 L940.70 295.60 L952.60 295.60 L964.50 295.60 L976.40 295.60 L988.30 295.60 L1000.20 295.60 L1012.10 295.60 L1024.00 295.60 L1035.90 295.60 L1047.80 295.60 L1059.70 295.60 L1071.60 295.60 L1083.50 295.60 L1095.40 295.60 L1107.30 295.60 L1119.20 295.60 L1131.10 295.60 L1143.00 295.60 L1154.90 295.60 L1166.80 295.60 L1178.70 295.60 L1190.60 295.60 L1202.50 295.60 L1214.40 295.60 L1226.30 295.60 L1238.20 295.60 L1250.10 295.60 L1262.00 295.60 L1273.90 295.60 L1285.80 295.60 L1297.70 295.60 L1309.60 295.60 L1321.50 295.60 L1333.40 295.60 L1345.30 295.60 L1357.20 295.60 L1369.10 295.60 L1381.00 295.60 L1392.90 295.60 L1404.80 295.60 L1416.70 295.60 L1428.60 295.60 L1440.50 295.60 L1452.40 295.60 L1464.30 295.60 L1476.20 295.60 L1488.10 295.60 L1500.00 295.60 L1511.90 295.60 L1523.80 295.60 L1535.70 295.60 L1547.60 295.60 L1559.50 295.60 L1571.40 295.60" fill="none" stroke="#c4672a" stroke-width="1"/>
<circle cx="857.40" cy="295.60" r="2.5" fill="#c4672a"/><circle cx="869.30" cy="295.60" r="2.5" fill="#c4672a"/><circle cx="881.20" cy="295.60" r="2.5" fill="#c4672a"/><circle cx="893.10" cy="295.60" r="2.5" fill="#c4672a"/><circle cx="905.00" cy="295.60" r="2.5" fill="#c4672a"/><circle cx="916.90" cy="295.60" r="2.5" fill="#c4672a"/><circle cx="928.80" cy="295.60" r="2.5" fill="#c4672a"/><circle cx="940.70" cy="295.60" r="2.5" fill="#c4672a"/><circle cx="952.60" cy="295.60" r="2.5" fill="#c4672a"/><circle cx="964.50" cy="295.60" r="2.5" fill="#c4672a"/><circle cx="976.40" cy="295.60" r="2.5" fill="#c4672a"/><circle cx="988.30" cy="295.60" r="2.5" fill="#c4672a"/><circle cx="1000.20" cy="295.60" r="2.5" fill="#c4672a"/><circle cx="1012.10" cy="295.60" r="2.5" fill="#c4672a"/><circle cx="1024.00" cy="295.60" r="2.5" fill="#c4672a"/><circle cx="1035.90" cy="295.60" r="2.5" fill="#c4672a"/><circle cx="1047.80" cy="295.60" r="2.5" fill="#c4672a"/><circle cx="1059.70" cy="295.60" r="2.5" fill="#c4672a"/><circle cx="1071.60" cy="295.60" r="2.5" fill="#c4672a"/><circle cx="1083.50" cy="295.60" r="2.5" fill="#c4672a"/><circle cx="1095.40" cy="295.60" r="2.5" fill="#c4672a"/><circle cx="1107.30" cy="295.60" r="2.5" fill="#c4672a"/><circle cx="1119.20" cy="295.60" r="2.5" fill="#c4672a"/><circle cx="1131.10" cy="295.60" r="2.5" fill="#c4672a"/><circle cx="1143.00" cy="295.60" r="2.5" fill="#c4672a"/><circle cx="1154.90" cy="295.60" r="2.5" fill="#c4672a"/><circle cx="1166.80" cy="295.60" r="2.5" fill="#c4672a"/><circle cx="1178.70" cy="295.60" r="2.5" fill="#c4672a"/><circle cx="1190.60" cy="295.60" r="2.5" fill="#c4672a"/><circle cx="1202.50" cy="295.60" r="2.5" fill="#c4672a"/><circle cx="1214.40" cy="295.60" r="2.5" fill="#c4672a"/><circle cx="1226.30" cy="295.60" r="2.5" fill="#c4672a"/><circle cx="1238.20" cy="295.60" r="2.5" fill="#c4672a"/><circle cx="1250.10" cy="295.60" r="2.5" fill="#c4672a"/><circle cx="1262.00" cy="295.60" r="2.5" fill="#c4672a"/><circle cx="1273.90" cy="295.60" r="2.5" fill="#c4672a"/><circle cx="1285.80" cy="295.60" r="2.5" fill="#c4672a"/><circle cx="1297.70" cy="295.60" r="2.5" fill="#c4672a"/><circle cx="1309.60" cy="295.60" r="2.5" fill="#c4672a"/><circle cx="1321.50" cy="295.60" r="2.5" fill="#c4672a"/><circle cx="1333.40" cy="295.60" r="2.5" fill="#c4672a"/><circle cx="1345.30" cy="295.60" r="2.5" fill="#c4672a"/><circle cx="1357.20" cy="295.60" r="2.5" fill="#c4672a"/><circle cx="1369.10" cy="295.60" r="2.5" fill="#c4672a"/><circle cx="1381.00" cy="295.60" r="2.5" fill="#c4672a"/><circle cx="1392.90" cy="295.60" r="2.5" fill="#c4672a"/><circle cx="1404.80" cy="295.60" r="2.5" fill="#c4672a"/><circle cx="1416.70" cy="295.60" r="2.5" fill="#c4672a"/><circle cx="1428.60" cy="295.60" r="2.5" fill="#c4672a"/><circle cx="1440.50" cy="295.60" r="2.5" fill="#c4672a"/><circle cx="1452.40" cy="295.60" r="2.5" fill="#c4672a"/><circle cx="1464.30" cy="295.60" r="2.5" fill="#c4672a"/><circle cx="1476.20" cy="295.60" r="2.5" fill="#c4672a"/><circle cx="1488.10" cy="295.60" r="2.5" fill="#c4672a"/><circle cx="1500.00" cy="295.60" r="2.5" fill="#c4672a"/><circle cx="1511.90" cy="295.60" r="2.5" fill="#c4672a"/><circle cx="1523.80" cy="295.60" r="2.5" fill="#c4672a"/><circle cx="1535.70" cy="295.60" r="2.5" fill="#c4672a"/><circle cx="1547.60" cy="295.60" r="2.5" fill="#c4672a"/><circle cx="1559.50" cy="295.60" r="2.5" fill="#c4672a"/>
</g>
<g clip-path="url(#c2)"><path d="M857.40 282.50 L869.30 282.50 L881.20 282.50 L893.10 282.50 L905.00 282.50 L916.90 282.50 L928.80 282.50 L940.70 282.50 L952.60 282.50 L964.50 282.50 L976.40 282.50 L988.30 282.50 L1000.20 282.50 L1012.10 282.50 L1024.00 282.50 L1035.90 282.50 L1047.80 282.50 L1059.70 282.50 L1071.60 282.50 L1083.50 282.50 L1095.40 282.50 L1107.30 282.50 L1119.20 282.50 L1131.10 282.50 L1143.00 282.50 L1154.90 282.50 L1166.80 282.50 L1178.70 282.50 L1190.60 282.50 L1202.50 282.50 L1214.40 282.50 L1226.30 282.50 L1238.20 282.50 L1250.10 282.50 L1262.00 282.50 L1273.90 282.50 L1285.80 282.50 L1297.70 282.50 L1309.60 282.50 L1321.50 282.50 L1333.40 282.50 L1345.30 282.50 L1357.20 282.50 L1369.10 282.50 L1381.00 282.50 L1392.90 282.50 L1404.80 282.50 L1416.70 282.50 L1428.60 282.50 L1440.50 282.50 L1452.40 282.50 L1464.30 282.50 L1476.20 282.50 L1488.10 282.50 L1500.00 282.50 L1511.90 282.50 L1523.80 282.50 L1535.70 282.50 L1547.60 282.50 L1559.50 282.50 L1571.40 282.50" fill="none" stroke="#2f82d2" stroke-width="1"/>
<circle cx="857.40" cy="282.50" r="2.5" fill="#2f82d2"/><circle cx="869.30" cy="282.50" r="2.5" fill="#2f82d2"/><circle cx="881.20" cy="282.50" r="2.5" fill="#2f82d2"/><circle cx="893.10" cy="282.50" r="2.5" fill="#2f82d2"/><circle cx="905.00" cy="282.50" r="2.5" fill="#2f82d2"/><circle cx="916.90" cy="282.50" r="2.5" fill="#2f82d2"/><circle cx="928.80" cy="282.50" r="2.5" fill="#2f82d2"/><circle cx="940.70" cy="282.50" r="2.5" fill="#2f82d2"/><circle cx="952.60" cy="282.50" r="2.5" fill="#2f82d2"/><circle cx="964.50" cy="282.50" r="2.5" fill="#2f82d2"/><circle cx="976.40" cy="282.50" r="2.5" fill="#2f82d2"/><circle cx="988.30" cy="282.50" r="2.5" fill="#2f82d2"/><circle cx="1000.20" cy="282.50" r="2.5" fill="#2f82d2"/><circle cx="1012.10" cy="282.50" r="2.5" fill="#2f82d2"/><circle cx="1024.00" cy="282.50" r="2.5" fill="#2f82d2"/><circle cx="1035.90" cy="282.50" r="2.5" fill="#2f82d2"/><circle cx="1047.80" cy="282.50" r="2.5" fill="#2f82d2"/><circle cx="1059.70" cy="282.50" r="2.5" fill="#2f82d2"/><circle cx="1071.60" cy="282.50" r="2.5" fill="#2f82d2"/><circle cx="1083.50" cy="282.50" r="2.5" fill="#2f82d2"/><circle cx="1095.40" cy="282.50" r="2.5" fill="#2f82d2"/><circle cx="1107.30" cy="282.50" r="2.5" fill="#2f82d2"/><circle cx="1119.20" cy="282.50" r="2.5" fill="#2f82d2"/><circle cx="1131.10" cy="282.50" r="2.5" fill="#2f82d2"/><circle cx="1143.00" cy="282.50" r="2.5" fill="#2f82d2"/><circle cx="1154.90" cy="282.50" r="2.5" fill="#2f82d2"/><circle cx="1166.80" cy="282.50" r="2.5" fill="#2f82d2"/><circle cx="1178.70" cy="282.50" r="2.5" fill="#2f82d2"/><circle cx="1190.60" cy="282.50" r="2.5" fill="#2f82d2"/><circle cx="1202.50" cy="282.50" r="2.5" fill="#2f82d2"/><circle cx="1214.40" cy="282.50" r="2.5" fill="#2f82d2"/><circle cx="1226.30" cy="282.50" r="2.5" fill="#2f82d2"/><circle cx="1238.20" cy="282.50" r="2.5" fill="#2f82d2"/><circle cx="1250.10" cy="282.50" r="2.5" fill="#2f82d2"/><circle cx="1262.00" cy="282.50" r="2.5" fill="#2f82d2"/><circle cx="1273.90" cy="282.50" r="2.5" fill="#2f82d2"/><circle cx="1285.80" cy="282.50" r="2.5" fill="#2f82d2"/><circle cx="1297.70" cy="282.50" r="2.5" fill="#2f82d2"/><circle cx="1309.60" cy="282.50" r="2.5" fill="#2f82d2"/><circle cx="1321.50" cy="282.50" r="2.5" fill="#2f82d2"/><circle cx="1333.40" cy="282.50" r="2.5" fill="#2f82d2"/><circle cx="1345.30" cy="282.50" r="2.5" fill="#2f82d2"/><circle cx="1357.20" cy="282.50" r="2.5" fill="#2f82d2"/><circle cx="1369.10" cy="282.50" r="2.5" fill="#2f82d2"/><circle cx="1381.00" cy="282.50" r="2.5" fill="#2f82d2"/><circle cx="1392.90" cy="282.50" r="2.5" fill="#2f82d2"/><circle cx="1404.80" cy="282.50" r="2.5" fill="#2f82d2"/><circle cx="1416.70" cy="282.50" r="2.5" fill="#2f82d2"/><circle cx="1428.60" cy="282.50" r="2.5" fill="#2f82d2"/><circle cx="1440.50" cy="282.50" r="2.5" fill="#2f82d2"/><circle cx="1452.40" cy="282.50" r="2.5" fill="#2f82d2"/><circle cx="1464.30" cy="282.50" r="2.5" fill="#2f82d2"/><circle cx="1476.20" cy="282.50" r="2.5" fill="#2f82d2"/><circle cx="1488.10" cy="282.50" r="2.5" fill="#2f82d2"/><circle cx="1500.00" cy="282.50" r="2.5" fill="#2f82d2"/><circle cx="1511.90" cy="282.50" r="2.5" fill="#2f82d2"/><circle cx="1523.80" cy="282.50" r="2.5" fill="#2f82d2"/><circle cx="1535.70" cy="282.50" r="2.5" fill="#2f82d2"/><circle cx="1547.60" cy="282.50" r="2.5" fill="#2f82d2"/><circle cx="1559.50" cy="282.50" r="2.5" fill="#2f82d2"/>
</g>
<g clip-path="url(#c2)"><path d="M857.40 245.50 L869.30 245.50 L881.20 245.50 L893.10 245.50 L905.00 245.50 L916.90 245.50 L928.80 245.50 L940.70 245.50 L952.60 245.50 L964.50 245.50 L976.40 245.50 L988.30 245.50 L1000.20 245.50 L1012.10 245.50 L1024.00 245.50 L1035.90 245.50 L1047.80 245.50 L1059.70 245.50 L1071.60 245.50 L1083.50 245.50 L1095.40 245.50 L1107.30 245.50 L1119.20 245.50 L1131.10 245.50 L1143.00 245.50 L1154.90 245.50 L1166.80 245.50 L1178.70 245.50 L1190.60 245.50 L1202.50 245.50 L1214.40 245.50 L1226.30 245.50 L1238.20 245.50 L1250.10 245.50 L1262.00 245.50 L1273.90 245.50 L1285.80 245.50 L1297.70 245.50 L1309.60 245.50 L1321.50 245.50 L1333.40 245.50 L1345.30 245.50 L1357.20 245.50 L1369.10 245.50 L1381.00 245.50 L1392.90 245.50 L1404.80 245.50 L1416.70 245.50 L1428.60 245.50 L1440.50 245.50 L1452.40 245.50 L1464.30 245.50 L1476.20 245.50 L1488.10 245.50 L1500.00 245.50 L1511.90 245.50 L1523.80 245.50 L1535.70 245.50 L1547.60 245.50 L1559.50 245.50 L1571.40 245.50" fill="none" stroke="#e24d42" stroke-width="1"/>
<circle cx="857.40" cy="245.50" r="2.5" fill="#e24d42"/><circle cx="869.30" cy="245.50" r="2.5" fill="#e24d42"/><circle cx="881.20" cy="245.50" r="2.5" fill="#e24d42"/><circle cx="893.10" cy="245.50" r="2.5" fill="#e24d42"/><circle cx="905.00" cy="245.50" r="2.5" fill="#e24d42"/><circle cx="916.90" cy="245.50" r="2.5" fill="#e24d42"/><circle cx="928.80" cy="245.50" r="2.5" fill="#e24d42"/><circle cx="940.70" cy="245.50" r="2.5" fill="#e24d42"/><circle cx="952.60" cy="245.50" r="2.5" fill="#e24d42"/><circle cx="964.50" cy="245.50" r="2.5" fill="#e24d42"/><circle cx="976.40" cy="245.50" r="2.5" fill="#e24d42"/><circle cx="988.30" cy="245.50" r="2.5" fill="#e24d42"/><circle cx="1000.20" cy="245.50" r="2.5" fill="#e24d42"/><circle cx="1012.10" cy="245.50" r="2.5" fill="#e24d42"/><circle cx="1024.00" cy="245.50" r="2.5" fill="#e24d42"/><circle cx="1035.90" cy="245.50" r="2.5" fill="#e24d42"/><circle cx="1047.80" cy="245.50" r="2.5" fill="#e24d42"/><circle cx="1059.70" cy="245.50" r="2.5" fill="#e24d42"/><circle cx="1071.60" cy="245.50" r="2.5" fill="#e24d42"/><circle cx="1083.50" cy="245.50" r="2.5" fill="#e24d42"/><circle cx="1095.40" cy="245.50" r="2.5" fill="#e24d42"/><circle cx="1107.30" cy="245.50" r="2.5" fill="#e24d42"/><circle cx="1119.20" cy="245.50" r="2.5" fill="#e24d42"/><circle cx="1131.10" cy="245.50" r="2.5" fill="#e24d42"/><circle cx="1143.00" cy="245.50" r="2.5" fill="#e24d42"/><circle cx="1154.90" cy="245.50" r="2.5" fill="#e24d42"/><circle cx="1166.80" cy="245.50" r="2.5" fill="#e24d42"/><circle cx="1178.70" cy="245.50" r="2.5" fill="#e24d42"/><circle cx="1190.60" cy="245.50" r="2.5" fill="#e24d42"/><circle cx="1202.50" cy="245.50" r="2.5" fill="#e24d42"/><circle cx="1214.40" cy="245.50" r="2.5" fill="#e24d42"/><circle cx="1226.30" cy="245.50" r="2.5" fill="#e24d42"/><circle cx="1238.20" cy="245.50" r="2.5" fill="#e24d42"/><circle cx="1250.10" cy="245.50" r="2.5" fill="#e24d42"/><circle cx="1262.00" cy="245.50" r="2.5" fill="#e24d42"/><circle cx="1273.90" cy="245.50" r="2.5" fill="#e24d42"/><circle cx="1285.80" cy="245.50" r="2.5" fill="#e24d42"/><circle cx="1297.70" cy="245.50" r="2.5" fill="#e24d42"/><circle cx="1309.60" cy="245.50" r="2.5" fill="#e24d42"/><circle cx="1321.50" cy="245.50" r="2.5" fill="#e24d42"/><circle cx="1333.40" cy="245.50" r="2.5" fill="#e24d42"/><circle cx="1345.30" cy="245.50" r="2.5" fill="#e24d42"/><circle cx="1357.20" cy="245.50" r="2.5" fill="#e24d42"/><circle cx="1369.10" cy="245.50" r="2.5" fill="#e24d42"/><circle cx="1381.00" cy="245.50" r="2.5" fill="#e24d42"/><circle cx="1392.90" cy="245.50" r="2.5" fill="#e24d42"/><circle cx="1404.80" cy="245.50" r="2.5" fill="#e24d42"/><circle cx="1416.70" cy="245.50" r="2.5" fill="#e24d42"/><circle cx="1428.60" cy="245.50" r="2.5" fill="#e24d42"/><circle cx="1440.50" cy="245.50" r="2.5" fill="#e24d42"/><circle cx="1452.40" cy="245.50" r="2.5" fill="#e24d42"/><circle cx="1464.30" cy="245.50" r="2.5" fill="#e24d42"/><circle cx="1476.20" cy="245.50" r="2.5" fill="#e24d42"/><circle cx="1488.10" cy="245.50" r="2.5" fill="#e24d42"/><circle cx="1500.00" cy="245.50" r="2.5" fill="#e24d42"/><circle cx="1511.90" cy="245.50" r="2.5" fill="#e24d42"/><circle cx="1523.80" cy="245.50" r="2.5" fill="#e24d42"/><circle cx="1535.70" cy="245.50" r="2.5" fill="#e24d42"/><circle cx="1547.60" cy="245.50" r="2.5" fill="#e24d42"/><circle cx="1559.50" cy="245.50" r="2.5" fill="#e24d42"/>
</g>
<g clip-path="url(#c2)"><path d="M857.40 182.60 L869.30 182.60 L881.20 182.60 L893.10 182.60 L905.00 182.60 L916.90 182.60 L928.80 182.60 L940.70 182.60 L952.60 182.60 L964.50 182.60 L976.40 182.60 L988.30 182.60 L1000.20 182.60 L1012.10 182.60 L1024.00 182.60 L1035.90 182.60 L1047.80 182.60 L1059.70 182.60 L1071.60 182.60 L1083.50 182.60 L1095.40 182.60 L1107.30 182.60 L1119.20 182.60 L1131.10 182.60 L1143.00 182.60 L1154.90 182.60 L1166.80 182.60 L1178.70 182.60 L1190.60 182.60 L1202.50 182.60 L1214.40 182.60 L1226.30 182.60 L1238.20 182.60 L1250.10 182.60 L1262.00 182.60 L1273.90 182.60 L1285.80 182.60 L1297.70 182.60 L1309.60 182.60 L1321.50 182.60 L1333.40 182.60 L1345.30 182.60 L1357.20 182.60 L1369.10 182.60 L1381.00 182.60 L1392.90 182.60 L1404.80 182.60 L1416.70 182.60 L1428.60 182.60 L1440.50 182.60 L1452.40 182.60 L1464.30 182.60 L1476.20 182.60 L1488.10 182.60 L1500.00 182.60 L1511.90 182.60 L1523.80 182.60 L1535.70 182.60 L1547.60 182.60 L1559.50 182.60 L1571.40 182.60" fill="none" stroke="#ba43a9" stroke-width="1"/>
<circle cx="857.40" cy="182.60" r="2.5" fill="#ba43a9"/><circle cx="869.30" cy="182.60" r="2.5" fill="#ba43a9"/><circle cx="881.20" cy="182.60" r="2.5" fill="#ba43a9"/><circle cx="893.10" cy="182.60" r="2.5" fill="#ba43a9"/><circle cx="905.00" cy="182.60" r="2.5" fill="#ba43a9"/><circle cx="916.90" cy="182.60" r="2.5" fill="#ba43a9"/><circle cx="928.80" cy="182.60" r="2.5" fill="#ba43a9"/><circle cx="940.70" cy="182.60" r="2.5" fill="#ba43a9"/><circle cx="952.60" cy="182.60" r="2.5" fill="#ba43a9"/><circle cx="964.50" cy="182.60" r="2.5" fill="#ba43a9"/><circle cx="976.40" cy="182.60" r="2.5" fill="#ba43a9"/><circle cx="988.30" cy="182.60" r="2.5" fill="#ba43a9"/><circle cx="1000.20" cy="182.60" r="2.5" fill="#ba43a9"/><circle cx="1012.10" cy="182.60" r="2.5" fill="#ba43a9"/><circle cx="1024.00" cy="182.60" r="2.5" fill="#ba43a9"/><circle cx="1035.90" cy="182.60" r="2.5" fill="#ba43a9"/><circle cx="1047.80" cy="182.60" r="2.5" fill="#ba43a9"/><circle cx="1059.70" cy="182.60" r="2.5" fill="#ba43a9"/><circle cx="1071.60" cy="182.60" r="2.5" fill="#ba43a9"/><circle cx="1083.50" cy="182.60" r="2.5" fill="#ba43a9"/><circle cx="1095.40" cy="182.60" r="2.5" fill="#ba43a9"/><circle cx="1107.30" cy="182.60" r="2.5" fill="#ba43a9"/><circle cx="1119.20" cy="182.60" r="2.5" fill="#ba43a9"/><circle cx="1131.10" cy="182.60" r="2.5" fill="#ba43a9"/><circle cx="1143.00" cy="182.60" r="2.5" fill="#ba43a9"/><circle cx="1154.90" cy="182.60" r="2.5" fill="#ba43a9"/><circle cx="1166.80" cy="182.60" r="2.5" fill="#ba43a9"/><circle cx="1178.70" cy="182.60" r="2.5" fill="#ba43a9"/><circle cx="1190.60" cy="182.60" r="2.5" fill="#ba43a9"/><circle cx="1202.50" cy="182.60" r="2.5" fill="#ba43a9"/><circle cx="1214.40" cy="182.60" r="2.5" fill="#ba43a9"/><circle cx="1226.30" cy="182.60" r="2.5" fill="#ba43a9"/><circle cx="1238.20" cy="182.60" r="2.5" fill="#ba43a9"/><circle cx="1250.10" cy="182.60" r="2.5" fill="#ba43a9"/><circle cx="1262.00" cy="182.60" r="2.5" fill="#ba43a9"/><circle cx="1273.90" cy="182.60" r="2.5" fill="#ba43a9"/><circle cx="1285.80" cy="182.60" r="2.5" fill="#ba43a9"/><circle cx="1297.70" cy="182.60" r="2.5" fill="#ba43a9"/><circle cx="1309.60" cy="182.60" r="2.5" fill="#ba43a9"/><circle cx="1321.50" cy="182.60" r="2.5" fill="#ba43a9"/><circle cx="1333.40" cy="182.60" r="2.5" fill="#ba43a9"/><circle cx="1345.30" cy="182.60" r="2.5" fill="#ba43a9"/><circle cx="1357.20" cy="182.60" r="2.5" fill="#ba43a9"/><circle cx="1369.10" cy="182.60" r="2.5" fill="#ba43a9"/><circle cx="1381.00" cy="182.60" r="2.5" fill="#ba43a9"/><circle cx="1392.90" cy="182.60" r="2.5" fill="#ba43a9"/><circle cx="1404.80" cy="182.60" r="2.5" fill="#ba43a9"/><circle cx="1416.70" cy="182.60" r="2.5" fill="#ba43a9"/><circle cx="1428.60" cy="182.60" r="2.5" fill="#ba43a9"/><circle cx="1440.50" cy="182.60" r="2.5" fill="#ba43a9"/><circle cx="1452.40" cy="182.60" r="2.5" fill="#ba43a9"/><circle cx="1464.30" cy="182.60" r="2.5" fill="#ba43a9"/><circle cx="1476.20" cy="182.60" r="2.5" fill="#ba43a9"/><circle cx="1488.10" cy="182.60" r="2.5" fill="#ba43a9"/><circle cx="1500.00" cy="182.60" r="2.5" fill="#ba43a9"/><circle cx="1511.90" cy="182.60" r="2.5" fill="#ba43a9"/><circle cx="1523.80" cy="182.60" r="2.5" fill="#ba43a9"/><circle cx="1535.70" cy="182.60" r="2.5" fill="#ba43a9"/><circle cx="1547.60" cy="182.60" r="2.5" fill="#ba43a9"/><circle cx="1559.50" cy="182.60" r="2.5" fill="#ba43a9"/>
</g>
<g clip-path="url(#c2)"><path d="M857.40 170.40 L869.30 170.40 L881.20 170.40 L893.10 170.40 L905.00 170.40 L916.90 170.40 L928.80 170.40 L940.70 170.40 L952.60 170.40 L964.50 170.40 L976.40 170.40 L988.30 170.40 L1000.20 170.40 L1012.10 170.40 L1024.00 170.40 L1035.90 170.40 L1047.80 170.40 L1059.70 170.40 L1071.60 170.40 L1083.50 170.40 L1095.40 170.40 L1107.30 170.40 L1119.20 170.40 L1131.10 170.40 L1143.00 170.40 L1154.90 170.40 L1166.80 170.40 L1178.70 170.40 L1190.60 170.40 L1202.50 170.40 L1214.40 170.40 L1226.30 170.40 L1238.20 170.40 L1250.10 170.40 L1262.00 170.40 L1273.90 170.40 L1285.80 170.40 L1297.70 170.40 L1309.60 170.40 L1321.50 170.40 L1333.40 170.40 L1345.30 170.40 L1357.20 170.40 L1369.10 170.40 L1381.00 170.40 L1392.90 170.40 L1404.80 170.40 L1416.70 170.40 L1428.60 170.40 L1440.50 170.40 L1452.40 170.40 L1464.30 170.40 L1476.20 170.40 L1488.10 170.40 L1500.00 170.40 L1511.90 170.40 L1523.80 170.40 L1535.70 170.40 L1547.60 170.40 L1559.50 170.40 L1571.40 170.40" fill="none" stroke="#7b5ea3" stroke-width="1"/>
<circle cx="857.40" cy="170.40" r="2.5" fill="#7b5ea3"/><circle cx="869.30" cy="170.40" r="2.5" fill="#7b5ea3"/><circle cx="881.20" cy="170.40" r="2.5" fill="#7b5ea3"/><circle cx="893.10" cy="170.40" r="2.5" fill="#7b5ea3"/><circle cx="905.00" cy="170.40" r="2.5" fill="#7b5ea3"/><circle cx="916.90" cy="170.40" r="2.5" fill="#7b5ea3"/><circle cx="928.80" cy="170.40" r="2.5" fill="#7b5ea3"/><circle cx="940.70" cy="170.40" r="2.5" fill="#7b5ea3"/><circle cx="952.60" cy="170.40" r="2.5" fill="#7b5ea3"/><circle cx="964.50" cy="170.40" r="2.5" fill="#7b5ea3"/><circle cx="976.40" cy="170.40" r="2.5" fill="#7b5ea3"/><circle cx="988.30" cy="170.40" r="2.5" fill="#7b5ea3"/><circle cx="1000.20" cy="170.40" r="2.5" fill="#7b5ea3"/><circle cx="1012.10" cy="170.40" r="2.5" fill="#7b5ea3"/><circle cx="1024.00" cy="170.40" r="2.5" fill="#7b5ea3"/><circle cx="1035.90" cy="170.40" r="2.5" fill="#7b5ea3"/><circle cx="1047.80" cy="170.40" r="2.5" fill="#7b5ea3"/><circle cx="1059.70" cy="170.40" r="2.5" fill="#7b5ea3"/><circle cx="1071.60" cy="170.40" r="2.5" fill="#7b5ea3"/><circle cx="1083.50" cy="170.40" r="2.5" fill="#7b5ea3"/><circle cx="1095.40" cy="170.40" r="2.5" fill="#7b5ea3"/><circle cx="1107.30" cy="170.40" r="2.5" fill="#7b5ea3"/><circle cx="1119.20" cy="170.40" r="2.5" fill="#7b5ea3"/><circle cx="1131.10" cy="170.40" r="2.5" fill="#7b5ea3"/><circle cx="1143.00" cy="170.40" r="2.5" fill="#7b5ea3"/><circle cx="1154.90" cy="170.40" r="2.5" fill="#7b5ea3"/><circle cx="1166.80" cy="170.40" r="2.5" fill="#7b5ea3"/><circle cx="1178.70" cy="170.40" r="2.5" fill="#7b5ea3"/><circle cx="1190.60" cy="170.40" r="2.5" fill="#7b5ea3"/><circle cx="1202.50" cy="170.40" r="2.5" fill="#7b5ea3"/><circle cx="1214.40" cy="170.40" r="2.5" fill="#7b5ea3"/><circle cx="1226.30" cy="170.40" r="2.5" fill="#7b5ea3"/><circle cx="1238.20" cy="170.40" r="2.5" fill="#7b5ea3"/><circle cx="1250.10" cy="170.40" r="2.5" fill="#7b5ea3"/><circle cx="1262.00" cy="170.40" r="2.5" fill="#7b5ea3"/><circle cx="1273.90" cy="170.40" r="2.5" fill="#7b5ea3"/><circle cx="1285.80" cy="170.40" r="2.5" fill="#7b5ea3"/><circle cx="1297.70" cy="170.40" r="2.5" fill="#7b5ea3"/><circle cx="1309.60" cy="170.40" r="2.5" fill="#7b5ea3"/><circle cx="1321.50" cy="170.40" r="2.5" fill="#7b5ea3"/><circle cx="1333.40" cy="170.40" r="2.5" fill="#7b5ea3"/><circle cx="1345.30" cy="170.40" r="2.5" fill="#7b5ea3"/><circle cx="1357.20" cy="170.40" r="2.5" fill="#7b5ea3"/><circle cx="1369.10" cy="170.40" r="2.5" fill="#7b5ea3"/><circle cx="1381.00" cy="170.40" r="2.5" fill="#7b5ea3"/><circle cx="1392.90" cy="170.40" r="2.5" fill="#7b5ea3"/><circle cx="1404.80" cy="170.40" r="2.5" fill="#7b5ea3"/><circle cx="1416.70" cy="170.40" r="2.5" fill="#7b5ea3"/><circle cx="1428.60" cy="170.40" r="2.5" fill="#7b5ea3"/><circle cx="1440.50" cy="170.40" r="2.5" fill="#7b5ea3"/><circle cx="1452.40" cy="170.40" r="2.5" fill="#7b5ea3"/><circle cx="1464.30" cy="170.40" r="2.5" fill="#7b5ea3"/><circle cx="1476.20" cy="170.40" r="2.5" fill="#7b5ea3"/><circle cx="1488.10" cy="170.40" r="2.5" fill="#7b5ea3"/><circle cx="1500.00" cy="170.40" r="2.5" fill="#7b5ea3"/><circle cx="1511.90" cy="170.40" r="2.5" fill="#7b5ea3"/><circle cx="1523.80" cy="170.40" r="2.5" fill="#7b5ea3"/><circle cx="1535.70" cy="170.40" r="2.5" fill="#7b5ea3"/><circle cx="1547.60" cy="170.40" r="2.5" fill="#7b5ea3"/><circle cx="1559.50" cy="170.40" r="2.5" fill="#7b5ea3"/>
</g>
<g clip-path="url(#leg2)">
<rect x="830" y="339" width="14" height="4" rx="1" fill="#73bf69"/>
<text x="852.4" y="345.2" font-size="12" fill="#cbd0d6" stroke="#cbd0d6" textLength="150.6" lengthAdjust="spacingAndGlyphs">TOTAL node_resolver_pshx7</text>
<rect x="1012.8" y="339" width="14" height="4" rx="1" fill="#eab839"/>
<text x="1035.4" y="345.2" font-size="12" fill="#cbd0d6" stroke="#cbd0d6" textLength="150.6" lengthAdjust="spacingAndGlyphs">TOTAL node_resolver_pshx7</text>
<rect x="1196" y="339" width="14" height="4" rx="1" fill="#6ed0e0"/>
<text x="1218.6" y="345.2" font-size="12" fill="#cbd0d6" stroke="#cbd0d6" textLength="150.6" lengthAdjust="spacingAndGlyphs">TOTAL node_resolver_pshx7</text>
<rect x="1379" y="339" width="14" height="4" rx="1" fill="#e24d42"/>
<text x="1401.2" y="345.2" font-size="12" fill="#cbd0d6" stroke="#cbd0d6" textLength="137.2" lengthAdjust="spacingAndGlyphs">CPU node_resolver_pshx7</text>
<rect x="830" y="361" width="14" height="4" rx="1" fill="#1f78c1"/>
<text x="852.4" y="367.2" font-size="12" fill="#cbd0d6" stroke="#cbd0d6" textLength="137.2" lengthAdjust="spacingAndGlyphs">CPU node_resolver_pshx7</text>
<rect x="1000" y="361" width="14" height="4" rx="1" fill="#ba43a9"/>
<text x="1022.6" y="367.2" font-size="12" fill="#cbd0d6" stroke="#cbd0d6" textLength="137.2" lengthAdjust="spacingAndGlyphs">CPU node_resolver_pshx7</text>
<rect x="1170" y="361" width="14" height="4" rx="1" fill="#508642"/>
<text x="1192.2" y="367.2" font-size="12" fill="#cbd0d6" stroke="#cbd0d6" textLength="147.6" lengthAdjust="spacingAndGlyphs">DRAM node_resolver_pshx7</text>
<rect x="1350.9" y="361" width="14" height="4" rx="1" fill="#cca300"/>
<text x="1373.3" y="367.2" font-size="12" fill="#cbd0d6" stroke="#cbd0d6" textLength="147.6" lengthAdjust="spacingAndGlyphs">DRAM node_resolver_pshx7</text>
<rect x="830" y="383" width="14" height="4" rx="1" fill="#447ebc"/>
<text x="852.4" y="389.2" font-size="12" fill="#cbd0d6" stroke="#cbd0d6" textLength="147.6" lengthAdjust="spacingAndGlyphs">DRAM node_resolver_pshx7</text>
<rect x="1010.9" y="383" width="14" height="4" rx="1" fill="#7eb26d"/>
<text x="1033" y="389.2" font-size="12" fill="#cbd0d6" stroke="#cbd0d6" textLength="191.8" lengthAdjust="spacingAndGlyphs">TOTAL apiserver_7b9bc9d9c6_rb8j2</text>
<rect x="1235.2" y="383" width="14" height="4" rx="1" fill="#eab839"/>
<text x="1257.6" y="389.2" font-size="12" fill="#cbd0d6" stroke="#cbd0d6" textLength="191.8" lengthAdjust="spacingAndGlyphs">TOTAL apiserver_7b9bc9d9c6_rb8j2</text>
<rect x="830" y="405" width="14" height="4" rx="1" fill="#6ed0e0"/>
<text x="852.4" y="411.2" font-size="12" fill="#cbd0d6" stroke="#cbd0d6" textLength="191.8" lengthAdjust="spacingAndGlyphs">TOTAL apiserver_7b9bc9d9c6_rb8j2</text>
<rect x="1055" y="405" width="14" height="4" rx="1" fill="#e24d42"/>
<text x="1076.7" y="411.2" font-size="12" fill="#cbd0d6" stroke="#cbd0d6" textLength="179.2" lengthAdjust="spacingAndGlyphs">CPU apiserver_7b9bc9d9c6_rb8j2</text>
<rect x="1266" y="405" width="14" height="4" rx="1" fill="#1f78c1"/>
<text x="1288.4" y="411.2" font-size="12" fill="#cbd0d6" stroke="#cbd0d6" textLength="179.2" lengthAdjust="spacingAndGlyphs">CPU apiserver_7b9bc9d9c6_rb8j2</text>
<rect x="830" y="427" width="14" height="4" rx="1" fill="#ba43a9"/>
<text x="852.4" y="433.2" font-size="12" fill="#cbd0d6" stroke="#cbd0d6" textLength="179.2" lengthAdjust="spacingAndGlyphs">CPU apiserver_7b9bc9d9c6_rb8j2</text>
<rect x="1041.8" y="427" width="14" height="4" rx="1" fill="#508642"/>
<text x="1063.7" y="433.2" font-size="12" fill="#cbd0d6" stroke="#cbd0d6" textLength="189.6" lengthAdjust="spacingAndGlyphs">DRAM apiserver_7b9bc9d9c6_rb8j2</text>
<rect x="1263.8" y="427" width="14" height="4" rx="1" fill="#cca300"/>
<text x="1286" y="433.2" font-size="12" fill="#cbd0d6" stroke="#cbd0d6" textLength="189.6" lengthAdjust="spacingAndGlyphs">DRAM apiserver_7b9bc9d9c6_rb8j2</text>
</g>
<text x="52.5" y="506" font-size="26" fill="#f24a55" stroke="#f24a55" text-anchor="middle">9.27</text>
<rect x="25.20" y="515" width="54.6" height="235" rx="2" fill="#242527"/>
<linearGradient id="bg0" gradientUnits="userSpaceOnUse" x1="0" y1="750" x2="0" y2="576.90"><stop offset="0" stop-color="#73bf69"/><stop offset="0.0462" stop-color="#73bf69"/><stop offset="0.1618" stop-color="#eab839"/><stop offset="0.62" stop-color="#ef843c"/><stop offset="1" stop-color="#f2495c"/></linearGradient>
<rect x="25.20" y="576.90" width="54.6" height="173.10" rx="2" fill="url(#bg0)"/>
<text x="52.5" y="764.8" font-size="13" fill="#cbd0d6" stroke="#cbd0d6" text-anchor="middle">kube_a...</text>
<text x="117.0" y="506" font-size="26" fill="#73bf69" stroke="#73bf69" text-anchor="middle">1.03</text>
<rect x="89.70" y="515" width="54.6" height="235" rx="2" fill="#242527"/>
<rect x="89.70" y="748.4" width="54.6" height="1.8" fill="#73bf69"/>
<text x="117.0" y="764.8" font-size="13" fill="#cbd0d6" stroke="#cbd0d6" text-anchor="middle">kube_a...</text>
<text x="181.5" y="506" font-size="26" fill="#f24a55" stroke="#f24a55" text-anchor="middle">5.15</text>
<rect x="154.20" y="515" width="54.6" height="235" rx="2" fill="#242527"/>
<linearGradient id="bg2" gradientUnits="userSpaceOnUse" x1="0" y1="750" x2="0" y2="663.20"><stop offset="0" stop-color="#73bf69"/><stop offset="0.0922" stop-color="#73bf69"/><stop offset="0.3226" stop-color="#eab839"/><stop offset="0.62" stop-color="#ef843c"/><stop offset="1" stop-color="#f2495c"/></linearGradient>
<rect x="154.20" y="663.20" width="54.6" height="86.80" rx="2" fill="url(#bg2)"/>
<text x="181.5" y="764.8" font-size="13" fill="#cbd0d6" stroke="#cbd0d6" text-anchor="middle">kube_a...</text>
<text x="246.0" y="506" font-size="26" fill="#f24a55" stroke="#f24a55" text-anchor="middle">12.4</text>
<rect x="218.70" y="515" width="54.6" height="235" rx="2" fill="#242527"/>
<linearGradient id="bg3" gradientUnits="userSpaceOnUse" x1="0" y1="750" x2="0" y2="512.10"><stop offset="0" stop-color="#73bf69"/><stop offset="0.0336" stop-color="#73bf69"/><stop offset="0.1177" stop-color="#eab839"/><stop offset="0.62" stop-color="#ef843c"/><stop offset="1" stop-color="#f2495c"/></linearGradient>
<rect x="218.70" y="512.10" width="54.6" height="237.90" rx="2" fill="url(#bg3)"/>
<text x="246.0" y="764.8" font-size="13" fill="#cbd0d6" stroke="#cbd0d6" text-anchor="middle">kube_a...</text>
<text x="310.5" y="506" font-size="26" fill="#f24a55" stroke="#f24a55" text-anchor="middle">4.12</text>
<rect x="283.20" y="515" width="54.6" height="235" rx="2" fill="#242527"/>
<linearGradient id="bg4" gradientUnits="userSpaceOnUse" x1="0" y1="750" x2="0" y2="685.30"><stop offset="0" stop-color="#73bf69"/><stop offset="0.1236" stop-color="#73bf69"/><stop offset="0.4328" stop-color="#eab839"/><stop offset="0.62" stop-color="#ef843c"/><stop offset="1" stop-color="#f2495c"/></linearGradient>
<rect x="283.20" y="685.30" width="54.6" height="64.70" rx="2" fill="url(#bg4)"/>
<text x="310.5" y="764.8" font-size="13" fill="#cbd0d6" stroke="#cbd0d6" text-anchor="middle">kube_a...</text>
<text x="375.0" y="506" font-size="26" fill="#73bf69" stroke="#73bf69" text-anchor="middle">1.03</text>
<rect x="347.70" y="515" width="54.6" height="235" rx="2" fill="#242527"/>
<rect x="347.70" y="748.4" width="54.6" height="1.8" fill="#73bf69"/>
<text x="375.0" y="764.8" font-size="13" fill="#cbd0d6" stroke="#cbd0d6" text-anchor="middle">kube_a...</text>
<text x="439.5" y="506" font-size="26" fill="#f24a55" stroke="#f24a55" text-anchor="middle">9.27</text>
<rect x="412.20" y="515" width="54.6" height="235" rx="2" fill="#242527"/>
<linearGradient id="bg6" gradientUnits="userSpaceOnUse" x1="0" y1="750" x2="0" y2="576.90"><stop offset="0" stop-color="#73bf69"/><stop offset="0.0462" stop-color="#73bf69"/><stop offset="0.1618" stop-color="#eab839"/><stop offset="0.62" stop-color="#ef843c"/><stop offset="1" stop-color="#f2495c"/></linearGradient>
<rect x="412.20" y="576.90" width="54.6" height="173.10" rx="2" fill="url(#bg6)"/>
<text x="439.5" y="764.8" font-size="13" fill="#cbd0d6" stroke="#cbd0d6" text-anchor="middle">kube_a...</text>
<text x="504.0" y="506" font-size="26" fill="#f24a55" stroke="#f24a55" text-anchor="middle">10.3</text>
<rect x="476.70" y="515" width="54.6" height="235" rx="2" fill="#242527"/>
<linearGradient id="bg7" gradientUnits="userSpaceOnUse" x1="0" y1="750" x2="0" y2="555.10"><stop offset="0" stop-color="#73bf69"/><stop offset="0.0410" stop-color="#73bf69"/><stop offset="0.1437" stop-color="#eab839"/><stop offset="0.62" stop-color="#ef843c"/><stop offset="1" stop-color="#f2495c"/></linearGradient>
<rect x="476.70" y="555.10" width="54.6" height="194.90" rx="2" fill="url(#bg7)"/>
<text x="504.0" y="764.8" font-size="13" fill="#cbd0d6" stroke="#cbd0d6" text-anchor="middle">kube_a...</text>
<text x="568.5" y="506" font-size="26" fill="#f24a55" stroke="#f24a55" text-anchor="middle">5.15</text>
<rect x="541.20" y="515" width="54.6" height="235" rx="2" fill="#242527"/>
<linearGradient id="bg8" gradientUnits="userSpaceOnUse" x1="0" y1="750" x2="0" y2="663.20"><stop offset="0" stop-color="#73bf69"/><stop offset="0.0922" stop-color="#73bf69"/><stop offset="0.3226" stop-color="#eab839"/><stop offset="0.62" stop-color="#ef843c"/><stop offset="1" stop-color="#f2495c"/></linearGradient>
<rect x="541.20" y="663.20" width="54.6" height="86.80" rx="2" fill="url(#bg8)"/>
<text x="568.5" y="764.8" font-size="13" fill="#cbd0d6" stroke="#cbd0d6" text-anchor="middle">kube_a...</text>
<text x="633.0" y="506" font-size="26" fill="#f24a55" stroke="#f24a55" text-anchor="middle">10.3</text>
<rect x="605.70" y="515" width="54.6" height="235" rx="2" fill="#242527"/>
<linearGradient id="bg9" gradientUnits="userSpaceOnUse" x1="0" y1="750" x2="0" y2="555.10"><stop offset="0" stop-color="#73bf69"/><stop offset="0.0410" stop-color="#73bf69"/><stop offset="0.1437" stop-color="#eab839"/><stop offset="0.62" stop-color="#ef843c"/><stop offset="1" stop-color="#f2495c"/></linearGradient>
<rect x="605.70" y="555.10" width="54.6" height="194.90" rx="2" fill="url(#bg9)"/>
<text x="633.0" y="764.8" font-size="13" fill="#cbd0d6" stroke="#cbd0d6" text-anchor="middle">kube_a...</text>
<text x="697.5" y="506" font-size="26" fill="#f24a55" stroke="#f24a55" text-anchor="middle">11.3</text>
<rect x="670.20" y="515" width="54.6" height="235" rx="2" fill="#242527"/>
<linearGradient id="bg10" gradientUnits="userSpaceOnUse" x1="0" y1="750" x2="0" y2="533.10"><stop offset="0" stop-color="#73bf69"/><stop offset="0.0369" stop-color="#73bf69"/><stop offset="0.1291" stop-color="#eab839"/><stop offset="0.62" stop-color="#ef843c"/><stop offset="1" stop-color="#f2495c"/></linearGradient>
<rect x="670.20" y="533.10" width="54.6" height="216.90" rx="2" fill="url(#bg10)"/>
<text x="697.5" y="764.8" font-size="13" fill="#cbd0d6" stroke="#cbd0d6" text-anchor="middle">kube_a...</text>
<text x="762.0" y="506" font-size="26" fill="#73bf69" stroke="#73bf69" text-anchor="middle">1.03</text>
<rect x="734.70" y="515" width="54.6" height="235" rx="2" fill="#242527"/>
<rect x="734.70" y="748.4" width="54.6" height="1.8" fill="#73bf69"/>
<text x="762.0" y="764.8" font-size="13" fill="#cbd0d6" stroke="#cbd0d6" text-anchor="middle">kube_a...</text>
<g clip-path="url(#tbl)">
<rect x="806" y="475" width="780" height="33" fill="#1f2022"/>
<text x="812.4" y="496.1" font-size="14" fill="#318bdc" stroke="#318bdc" textLength="30.6" lengthAdjust="spacingAndGlyphs">Time</text>
<text x="1072.6" y="496.1" font-size="14" fill="#318bdc" stroke="#318bdc" textLength="73.9" lengthAdjust="spacingAndGlyphs">Namespace</text>
<path d="M1152.2 486.4 Q1158.9 482.6 1165.6 486.4 L1160.6 491.8 V495.6 L1157.7 497.4 V491.8 Z M1153.6 487 H1164.2" fill="none" stroke="#454b4e" stroke-width="1.2" stroke-linejoin="round"/>
<text x="1541" y="496.1" font-size="14" fill="#318bdc" stroke="#318bdc" textLength="18.5" lengthAdjust="spacingAndGlyphs">kW</text>
<path d="M1568 486.5 V495.5 M1564.6 492.2 L1568 495.6 L1571.4 492.2" fill="none" stroke="#318bdc" stroke-width="1.6"/>
<rect x="806" y="542" width="780" height="1" fill="#1f2022"/>
<text x="812.4" y="530" font-size="14" fill="#f24a55" stroke="#f24a55" textLength="127.2" lengthAdjust="spacingAndGlyphs">2022-04-15 14:34:20</text>
<text x="1072.6" y="530" font-size="14" fill="#73bf69" stroke="#73bf69">openshift-storage</text>
<rect x="1332" y="515" width="7" height="21" rx="2" fill="rgb(92, 160, 80)"/>
<rect x="1340" y="515" width="7" height="21" rx="2" fill="rgb(100, 161, 76)"/>
<rect x="1348" y="515" width="7" height="21" rx="2" fill="rgb(108, 162, 71)"/>
<rect x="1356" y="515" width="7" height="21" rx="2" fill="rgb(117, 164, 66)"/>
<rect x="1364" y="515" width="7" height="21" rx="2" fill="rgb(125, 165, 62)"/>
<rect x="1372" y="515" width="7" height="21" rx="2" fill="rgb(136, 165, 61)"/>
<rect x="1380" y="515" width="7" height="21" rx="2" fill="rgb(147, 165, 60)"/>
<rect x="1388" y="515" width="7" height="21" rx="2" fill="rgb(158, 165, 60)"/>
<rect x="1396" y="515" width="7" height="21" rx="2" fill="rgb(169, 165, 59)"/>
<rect x="1404" y="515" width="7" height="21" rx="2" fill="rgb(180, 165, 58)"/>
<rect x="1412" y="515" width="7" height="21" rx="2" fill="rgb(184, 163, 56)"/>
<rect x="1420" y="515" width="7" height="21" rx="2" fill="rgb(188, 162, 55)"/>
<rect x="1428" y="515" width="7" height="21" rx="2" fill="rgb(191, 160, 54)"/>
<rect x="1436" y="515" width="7" height="21" rx="2" fill="rgb(195, 158, 52)"/>
<rect x="1444" y="515" width="7" height="21" rx="2" fill="rgb(198, 149, 51)"/>
<rect x="1452" y="515" width="7" height="21" rx="2" fill="rgb(202, 140, 50)"/>
<rect x="1460" y="515" width="7" height="21" rx="2" fill="rgb(208, 115, 48)"/>
<rect x="1468" y="515" width="7" height="21" rx="2" fill="rgb(208, 112, 49)"/>
<rect x="1476" y="515" width="7" height="21" rx="2" fill="rgb(208, 108, 50)"/>
<rect x="1484" y="515" width="7" height="21" rx="2" fill="rgb(200, 85, 60)"/>
<rect x="1492" y="515" width="7" height="21" rx="2" fill="rgb(200, 80, 65)"/>
<rect x="1500" y="515" width="7" height="21" rx="2" fill="rgb(200, 75, 70)"/>
<rect x="1508" y="515" width="7" height="21" rx="2" fill="rgb(200, 70, 75)"/>
<text x="1527" y="530" font-size="14" fill="#f2495c" stroke="#f2495c" textLength="30" lengthAdjust="spacingAndGlyphs">1009</text>
<rect x="806" y="577" width="780" height="1" fill="#1f2022"/>
<text x="812.4" y="565" font-size="14" fill="#f24a55" stroke="#f24a55" textLength="127.2" lengthAdjust="spacingAndGlyphs">2022-04-15 14:34:20</text>
<text x="1072.6" y="565" font-size="14" fill="#73bf69" stroke="#73bf69">openshift-monitoring</text>
<rect x="1332" y="550" width="7" height="21" rx="2" fill="rgb(92, 160, 80)"/>
<rect x="1340" y="550" width="7" height="21" rx="2" fill="rgb(100, 161, 76)"/>
<rect x="1348" y="550" width="7" height="21" rx="2" fill="rgb(108, 162, 71)"/>
<rect x="1356" y="550" width="7" height="21" rx="2" fill="rgb(117, 164, 66)"/>
<rect x="1364" y="550" width="7" height="21" rx="2" fill="rgb(125, 165, 62)"/>
<rect x="1372" y="550" width="7" height="21" rx="2" fill="rgb(136, 165, 61)"/>
<rect x="1380" y="550" width="7" height="21" rx="2" fill="rgb(147, 165, 60)"/>
<rect x="1388" y="550" width="7" height="21" rx="2" fill="rgb(158, 165, 60)"/>
<rect x="1396" y="550" width="7" height="21" rx="2" fill="rgb(169, 165, 59)"/>
<rect x="1404" y="550" width="7" height="21" rx="2" fill="rgb(180, 165, 58)"/>
<rect x="1412" y="550" width="7" height="21" rx="2" fill="rgb(184, 163, 56)"/>
<rect x="1420" y="550" width="7" height="21" rx="2" fill="rgb(188, 162, 55)"/>
<rect x="1428" y="550" width="7" height="21" rx="2" fill="rgb(191, 160, 54)"/>
<rect x="1436" y="550" width="7" height="21" rx="2" fill="rgb(195, 158, 52)"/>
<rect x="1444" y="550" width="7" height="21" rx="2" fill="rgb(198, 149, 51)"/>
<rect x="1452" y="550" width="7" height="21" rx="2" fill="rgb(202, 140, 50)"/>
<rect x="1460" y="550" width="7" height="21" rx="2" fill="#3a2a20"/>
<rect x="1468" y="550" width="7" height="21" rx="2" fill="#3a2a20"/>
<rect x="1476" y="550" width="7" height="21" rx="2" fill="#3a2a20"/>
<rect x="1484" y="550" width="7" height="21" rx="2" fill="#3a2a20"/>
<rect x="1492" y="550" width="7" height="21" rx="2" fill="#3a2a20"/>
<rect x="1500" y="550" width="7" height="21" rx="2" fill="#3a2a20"/>
<rect x="1508" y="550" width="7" height="21" rx="2" fill="#3a2a20"/>
<rect x="1516" y="550" width="7" height="21" rx="2" fill="#3a2a20"/>
<text x="1538.8" y="565" font-size="14" fill="#ef843c" stroke="#ef843c" textLength="23.5" lengthAdjust="spacingAndGlyphs">667</text>
<rect x="806" y="612" width="780" height="1" fill="#1f2022"/>
<text x="812.4" y="600" font-size="14" fill="#f24a55" stroke="#f24a55" textLength="127.2" lengthAdjust="spacingAndGlyphs">2022-04-15 14:34:20</text>
<text x="1072.6" y="600" font-size="14" fill="#73bf69" stroke="#73bf69">openshift-kni-infra</text>
<rect x="1332" y="585" width="7" height="21" rx="2" fill="rgb(92, 160, 80)"/>
<rect x="1340" y="585" width="7" height="21" rx="2" fill="rgb(100, 161, 76)"/>
<rect x="1348" y="585" width="7" height="21" rx="2" fill="rgb(108, 162, 71)"/>
<rect x="1356" y="585" width="7" height="21" rx="2" fill="rgb(117, 164, 66)"/>
<rect x="1364" y="585" width="7" height="21" rx="2" fill="rgb(125, 165, 62)"/>
<rect x="1372" y="585" width="7" height="21" rx="2" fill="rgb(136, 165, 61)"/>
<rect x="1380" y="585" width="7" height="21" rx="2" fill="rgb(147, 165, 60)"/>
<rect x="1388" y="585" width="7" height="21" rx="2" fill="rgb(158, 165, 60)"/>
<rect x="1396" y="585" width="7" height="21" rx="2" fill="rgb(169, 165, 59)"/>
<rect x="1404" y="585" width="7" height="21" rx="2" fill="rgb(180, 165, 58)"/>
<rect x="1412" y="585" width="7" height="21" rx="2" fill="rgb(184, 163, 56)"/>
<rect x="1420" y="585" width="7" height="21" rx="2" fill="rgb(188, 162, 55)"/>
<rect x="1428" y="585" width="7" height="21" rx="2" fill="#3a2a20"/>
<rect x="1436" y="585" width="7" height="21" rx="2" fill="#3a2a20"/>
<rect x="1444" y="585" width="7" height="21" rx="2" fill="#3a2a20"/>
<rect x="1452" y="585" width="7" height="21" rx="2" fill="#3a2a20"/>
<rect x="1460" y="585" width="7" height="21" rx="2" fill="#3a2a20"/>
<rect x="1468" y="585" width="7" height="21" rx="2" fill="#3a2a20"/>
<rect x="1476" y="585" width="7" height="21" rx="2" fill="#3a2a20"/>
<rect x="1484" y="585" width="7" height="21" rx="2" fill="#3a2a20"/>
<rect x="1492" y="585" width="7" height="21" rx="2" fill="#3a2a20"/>
<rect x="1500" y="585" width="7" height="21" rx="2" fill="#3a2a20"/>
<rect x="1508" y="585" width="7" height="21" rx="2" fill="#3a2a20"/>
<rect x="1516" y="585" width="7" height="21" rx="2" fill="#3a2a20"/>
<text x="1538.8" y="600" font-size="14" fill="#e5c03a" stroke="#e5c03a" textLength="23.5" lengthAdjust="spacingAndGlyphs">488</text>
<rect x="806" y="647" width="780" height="1" fill="#1f2022"/>
<text x="812.4" y="635" font-size="14" fill="#f24a55" stroke="#f24a55" textLength="127.2" lengthAdjust="spacingAndGlyphs">2022-04-15 14:34:20</text>
<text x="1072.6" y="635" font-size="14" fill="#73bf69" stroke="#73bf69">openshift-multus</text>
<rect x="1332" y="620" width="7" height="21" rx="2" fill="rgb(92, 160, 80)"/>
<rect x="1340" y="620" width="7" height="21" rx="2" fill="rgb(100, 161, 76)"/>
<rect x="1348" y="620" width="7" height="21" rx="2" fill="rgb(108, 162, 71)"/>
<rect x="1356" y="620" width="7" height="21" rx="2" fill="rgb(117, 164, 66)"/>
<rect x="1364" y="620" width="7" height="21" rx="2" fill="rgb(125, 165, 62)"/>
<rect x="1372" y="620" width="7" height="21" rx="2" fill="rgb(136, 165, 61)"/>
<rect x="1380" y="620" width="7" height="21" rx="2" fill="rgb(147, 165, 60)"/>
<rect x="1388" y="620" width="7" height="21" rx="2" fill="rgb(158, 165, 60)"/>
<rect x="1396" y="620" width="7" height="21" rx="2" fill="rgb(169, 165, 59)"/>
<rect x="1404" y="620" width="7" height="21" rx="2" fill="rgb(180, 165, 58)"/>
<rect x="1412" y="620" width="7" height="21" rx="2" fill="rgb(184, 163, 56)"/>
<rect x="1420" y="620" width="7" height="21" rx="2" fill="rgb(188, 162, 55)"/>
<rect x="1428" y="620" width="7" height="21" rx="2" fill="#3a2a20"/>
<rect x="1436" y="620" width="7" height="21" rx="2" fill="#3a2a20"/>
<rect x="1444" y="620" width="7" height="21" rx="2" fill="#3a2a20"/>
<rect x="1452" y="620" width="7" height="21" rx="2" fill="#3a2a20"/>
<rect x="1460" y="620" width="7" height="21" rx="2" fill="#3a2a20"/>
<rect x="1468" y="620" width="7" height="21" rx="2" fill="#3a2a20"/>
<rect x="1476" y="620" width="7" height="21" rx="2" fill="#3a2a20"/>
<rect x="1484" y="620" width="7" height="21" rx="2" fill="#3a2a20"/>
<rect x="1492" y="620" width="7" height="21" rx="2" fill="#3a2a20"/>
<rect x="1500" y="620" width="7" height="21" rx="2" fill="#3a2a20"/>
<rect x="1508" y="620" width="7" height="21" rx="2" fill="#3a2a20"/>
<rect x="1516" y="620" width="7" height="21" rx="2" fill="#3a2a20"/>
<text x="1538.8" y="635" font-size="14" fill="#e5c03a" stroke="#e5c03a" textLength="23.5" lengthAdjust="spacingAndGlyphs">488</text>
<rect x="806" y="682" width="780" height="1" fill="#1f2022"/>
<text x="812.4" y="670" font-size="14" fill="#f24a55" stroke="#f24a55" textLength="127.2" lengthAdjust="spacingAndGlyphs">2022-04-15 14:34:20</text>
<text x="1072.6" y="670" font-size="14" fill="#73bf69" stroke="#73bf69">openshift-sriov-network-operator</text>
<rect x="1332" y="655" width="7" height="21" rx="2" fill="rgb(92, 160, 80)"/>
<rect x="1340" y="655" width="7" height="21" rx="2" fill="rgb(100, 161, 76)"/>
<rect x="1348" y="655" width="7" height="21" rx="2" fill="rgb(108, 162, 71)"/>
<rect x="1356" y="655" width="7" height="21" rx="2" fill="rgb(117, 164, 66)"/>
<rect x="1364" y="655" width="7" height="21" rx="2" fill="rgb(125, 165, 62)"/>
<rect x="1372" y="655" width="7" height="21" rx="2" fill="rgb(136, 165, 61)"/>
<rect x="1380" y="655" width="7" height="21" rx="2" fill="rgb(147, 165, 60)"/>
<rect x="1388" y="655" width="7" height="21" rx="2" fill="rgb(158, 165, 60)"/>
<rect x="1396" y="655" width="7" height="21" rx="2" fill="rgb(169, 165, 59)"/>
<rect x="1404" y="655" width="7" height="21" rx="2" fill="rgb(180, 165, 58)"/>
<rect x="1412" y="655" width="7" height="21" rx="2" fill="#3a2a20"/>
<rect x="1420" y="655" width="7" height="21" rx="2" fill="#3a2a20"/>
<rect x="1428" y="655" width="7" height="21" rx="2" fill="#3a2a20"/>
<rect x="1436" y="655" width="7" height="21" rx="2" fill="#3a2a20"/>
<rect x="1444" y="655" width="7" height="21" rx="2" fill="#3a2a20"/>
<rect x="1452" y="655" width="7" height="21" rx="2" fill="#3a2a20"/>
<rect x="1460" y="655" width="7" height="21" rx="2" fill="#3a2a20"/>
<rect x="1468" y="655" width="7" height="21" rx="2" fill="#3a2a20"/>
<rect x="1476" y="655" width="7" height="21" rx="2" fill="#3a2a20"/>
<rect x="1484" y="655" width="7" height="21" rx="2" fill="#3a2a20"/>
<rect x="1492" y="655" width="7" height="21" rx="2" fill="#3a2a20"/>
<rect x="1500" y="655" width="7" height="21" rx="2" fill="#3a2a20"/>
<rect x="1508" y="655" width="7" height="21" rx="2" fill="#3a2a20"/>
<rect x="1516" y="655" width="7" height="21" rx="2" fill="#3a2a20"/>
<text x="1538.8" y="670" font-size="14" fill="#e5c03a" stroke="#e5c03a" textLength="23.5" lengthAdjust="spacingAndGlyphs">411</text>
<rect x="806" y="717" width="780" height="1" fill="#1f2022"/>
<text x="812.4" y="705" font-size="14" fill="#f24a55" stroke="#f24a55" textLength="127.2" lengthAdjust="spacingAndGlyphs">2022-04-15 14:34:20</text>
<text x="1072.6" y="705" font-size="14" fill="#73bf69" stroke="#73bf69">openshift-dns</text>
<rect x="1332" y="690" width="7" height="21" rx="2" fill="rgb(92, 160, 80)"/>
<rect x="1340" y="690" width="7" height="21" rx="2" fill="rgb(100, 161, 76)"/>
<rect x="1348" y="690" width="7" height="21" rx="2" fill="rgb(108, 162, 71)"/>
<rect x="1356" y="690" width="7" height="21" rx="2" fill="rgb(117, 164, 66)"/>
<rect x="1364" y="690" width="7" height="21" rx="2" fill="rgb(125, 165, 62)"/>
<rect x="1372" y="690" width="7" height="21" rx="2" fill="rgb(136, 165, 61)"/>
<rect x="1380" y="690" width="7" height="21" rx="2" fill="rgb(147, 165, 60)"/>
<rect x="1388" y="690" width="7" height="21" rx="2" fill="rgb(158, 165, 60)"/>
<rect x="1396" y="690" width="7" height="21" rx="2" fill="#3a2a20"/>
<rect x="1404" y="690" width="7" height="21" rx="2" fill="#3a2a20"/>
<rect x="1412" y="690" width="7" height="21" rx="2" fill="#3a2a20"/>
<rect x="1420" y="690" width="7" height="21" rx="2" fill="#3a2a20"/>
<rect x="1428" y="690" width="7" height="21" rx="2" fill="#3a2a20"/>
<rect x="1436" y="690" width="7" height="21" rx="2" fill="#3a2a20"/>
<rect x="1444" y="690" width="7" height="21" rx="2" fill="#3a2a20"/>
<rect x="1452" y="690" width="7" height="21" rx="2" fill="#3a2a20"/>
<rect x="1460" y="690" width="7" height="21" rx="2" fill="#3a2a20"/>
<rect x="1468" y="690" width="7" height="21" rx="2" fill="#3a2a20"/>
<rect x="1476" y="690" width="7" height="21" rx="2" fill="#3a2a20"/>
<rect x="1484" y="690" width="7" height="21" rx="2" fill="#3a2a20"/>
<rect x="1492" y="690" width="7" height="21" rx="2" fill="#3a2a20"/>
<rect x="1500" y="690" width="7" height="21" rx="2" fill="#3a2a20"/>
<rect x="1508" y="690" width="7" height="21" rx="2" fill="#3a2a20"/>
<rect x="1516" y="690" width="7" height="21" rx="2" fill="#3a2a20"/>
<text x="1538.8" y="705" font-size="14" fill="#e5c03a" stroke="#e5c03a" textLength="23.5" lengthAdjust="spacingAndGlyphs">336</text>
<rect x="806" y="752" width="780" height="1" fill="#1f2022"/>
<text x="812.4" y="740" font-size="14" fill="#f24a55" stroke="#f24a55" textLength="127.2" lengthAdjust="spacingAndGlyphs">2022-04-15 14:34:20</text>
<text x="1072.6" y="740" font-size="14" fill="#73bf69" stroke="#73bf69">openshift-machine-config-operator</text>
<rect x="1332" y="725" width="7" height="21" rx="2" fill="rgb(92, 160, 80)"/>
<rect x="1340" y="725" width="7" height="21" rx="2" fill="rgb(100, 161, 76)"/>
<rect x="1348" y="725" width="7" height="21" rx="2" fill="rgb(108, 162, 71)"/>
<rect x="1356" y="725" width="7" height="21" rx="2" fill="rgb(117, 164, 66)"/>
<rect x="1364" y="725" width="7" height="21" rx="2" fill="rgb(125, 165, 62)"/>
<rect x="1372" y="725" width="7" height="21" rx="2" fill="rgb(136, 165, 61)"/>
<rect x="1380" y="725" width="7" height="21" rx="2" fill="rgb(147, 165, 60)"/>
<rect x="1388" y="725" width="7" height="21" rx="2" fill="#3a2a20"/>
<rect x="1396" y="725" width="7" height="21" rx="2" fill="#3a2a20"/>
<rect x="1404" y="725" width="7" height="21" rx="2" fill="#3a2a20"/>
<rect x="1412" y="725" width="7" height="21" rx="2" fill="#3a2a20"/>
<rect x="1420" y="725" width="7" height="21" rx="2" fill="#3a2a20"/>
<rect x="1428" y="725" width="7" height="21" rx="2" fill="#3a2a20"/>
<rect x="1436" y="725" width="7" height="21" rx="2" fill="#3a2a20"/>
<rect x="1444" y="725" width="7" height="21" rx="2" fill="#3a2a20"/>
<rect x="1452" y="725" width="7" height="21" rx="2" fill="#3a2a20"/>
<rect x="1460" y="725" width="7" height="21" rx="2" fill="#3a2a20"/>
<rect x="1468" y="725" width="7" height="21" rx="2" fill="#3a2a20"/>
<rect x="1476" y="725" width="7" height="21" rx="2" fill="#3a2a20"/>
<rect x="1484" y="725" width="7" height="21" rx="2" fill="#3a2a20"/>
<rect x="1492" y="725" width="7" height="21" rx="2" fill="#3a2a20"/>
<rect x="1500" y="725" width="7" height="21" rx="2" fill="#3a2a20"/>
<rect x="1508" y="725" width="7" height="21" rx="2" fill="#3a2a20"/>
<rect x="1516" y="725" width="7" height="21" rx="2" fill="#3a2a20"/>
<text x="1538.8" y="740" font-size="14" fill="#e5c03a" stroke="#e5c03a" textLength="23.5" lengthAdjust="spacingAndGlyphs">309</text>
<rect x="806" y="753" width="780" height="35" fill="#1c1d1f"/>
<rect x="806" y="787" width="780" height="1" fill="#1f2022"/>
<text x="812.4" y="775" font-size="14" fill="#f24a55" stroke="#f24a55" textLength="127.2" lengthAdjust="spacingAndGlyphs">2022-04-15 14:34:20</text>
<text x="1072.6" y="775" font-size="14" fill="#73bf69" stroke="#73bf69">openshift-marketplace</text>
<rect x="1332" y="760" width="7" height="21" rx="2" fill="rgb(92, 160, 80)"/>
<rect x="1340" y="760" width="7" height="21" rx="2" fill="rgb(100, 161, 76)"/>
<rect x="1348" y="760" width="7" height="21" rx="2" fill="rgb(108, 162, 71)"/>
<rect x="1356" y="760" width="7" height="21" rx="2" fill="rgb(117, 164, 66)"/>
<rect x="1364" y="760" width="7" height="21" rx="2" fill="rgb(125, 165, 62)"/>
<rect x="1372" y="760" width="7" height="21" rx="2" fill="rgb(136, 165, 61)"/>
<rect x="1380" y="760" width="7" height="21" rx="2" fill="rgb(147, 165, 60)"/>
<rect x="1388" y="760" width="7" height="21" rx="2" fill="#3a2a20"/>
<rect x="1396" y="760" width="7" height="21" rx="2" fill="#3a2a20"/>
<rect x="1404" y="760" width="7" height="21" rx="2" fill="#3a2a20"/>
<rect x="1412" y="760" width="7" height="21" rx="2" fill="#3a2a20"/>
<rect x="1420" y="760" width="7" height="21" rx="2" fill="#3a2a20"/>
<rect x="1428" y="760" width="7" height="21" rx="2" fill="#3a2a20"/>
<rect x="1436" y="760" width="7" height="21" rx="2" fill="#3a2a20"/>
<rect x="1444" y="760" width="7" height="21" rx="2" fill="#3a2a20"/>
<rect x="1452" y="760" width="7" height="21" rx="2" fill="#3a2a20"/>
<rect x="1460" y="760" width="7" height="21" rx="2" fill="#3a2a20"/>
<rect x="1468" y="760" width="7" height="21" rx="2" fill="#3a2a20"/>
<rect x="1476" y="760" width="7" height="21" rx="2" fill="#3a2a20"/>
<rect x="1484" y="760" width="7" height="21" rx="2" fill="#3a2a20"/>
<rect x="1492" y="760" width="7" height="21" rx="2" fill="#3a2a20"/>
<rect x="1500" y="760" width="7" height="21" rx="2" fill="#3a2a20"/>
<rect x="1508" y="760" width="7" height="21" rx="2" fill="#3a2a20"/>
<rect x="1516" y="760" width="7" height="21" rx="2" fill="#3a2a20"/>
<text x="1538.8" y="775" font-size="14" fill="#e5c03a" stroke="#e5c03a" textLength="23.5" lengthAdjust="spacingAndGlyphs">307</text>
<rect x="1064.8" y="475" width="1" height="300" fill="#1b1c1e"/>
<rect x="1324.9" y="475" width="1" height="300" fill="#1b1c1e"/>
</g>
<g fill="none" stroke="#5f6168" stroke-width="1.4"><path d="M1567.8 459.5 A6.3 6.3 0 0 1 1579.6 458.6"/><path d="M1580 462.2 A6.3 6.3 0 0 1 1568.2 463.2"/></g>
<path d="M1579.8 454 L1580.4 459.2 L1575.6 458.6 Z M1567.9 467.8 L1567.3 462.6 L1572.1 463.2 Z" fill="#5f6168"/>
</svg></body></html>
